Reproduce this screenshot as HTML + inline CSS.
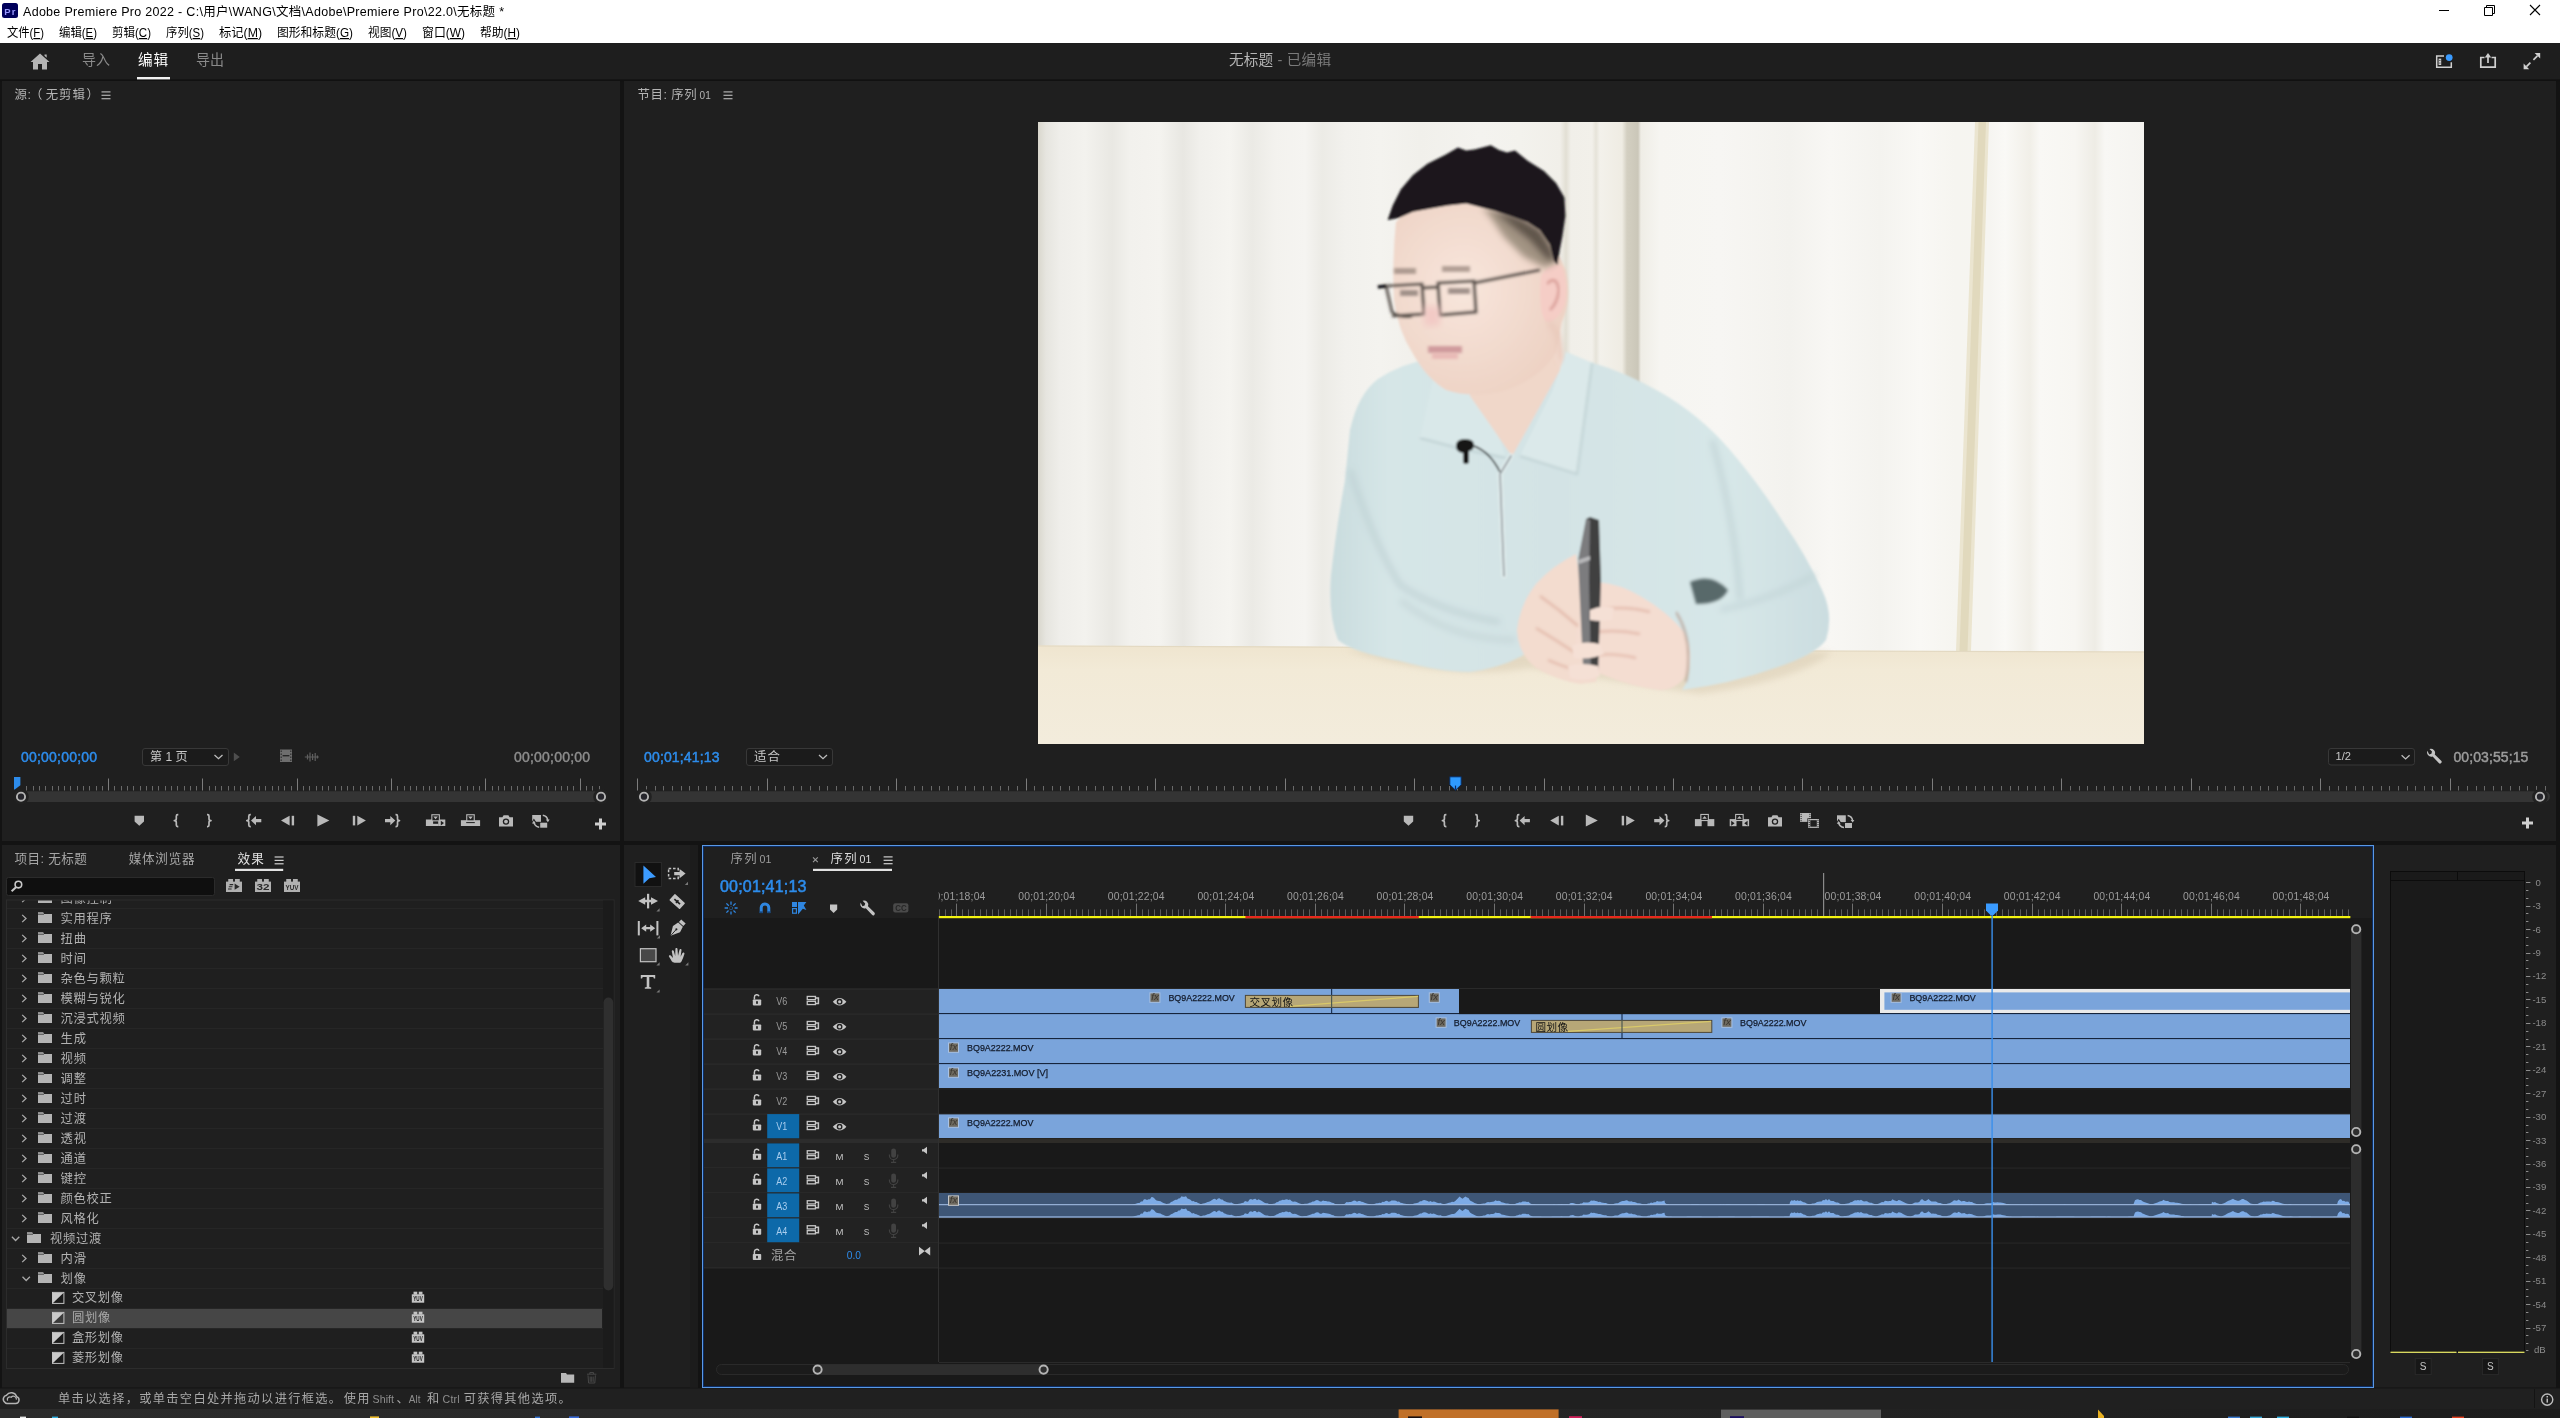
<!DOCTYPE html>
<html lang="zh-CN"><head><meta charset="utf-8"><title>Adobe Premiere Pro 2022</title>
<style>
html,body{margin:0;padding:0;background:#161616;}
body{width:2560px;height:1418px;overflow:hidden;position:relative;}
svg#ui{position:absolute;left:0;top:0;display:block;opacity:.999;font-family:"Liberation Sans","Noto Sans CJK SC",sans-serif;}
svg#ui text{white-space:pre;}
</style></head><body>
<svg id="ui" width="2560" height="1418" viewBox="0 0 2560 1418">
<rect x="0" y="0" width="2560" height="1418" fill="#131313"/>
<g id="top">
<rect x="0" y="0" width="2560" height="43" fill="#ffffff" />
<rect x="2" y="3" width="16" height="15" fill="#00005b" rx="2.5"/>
<text x="4.2" y="14.6" font-size="9.5" fill="#9999ff" textLength="11.3" lengthAdjust="spacing" font-weight="bold" >Pr</text>
<text x="23" y="16" font-size="12.5" fill="#000" textLength="481" lengthAdjust="spacing" >Adobe Premiere Pro 2022 - C:\用户\WANG\文档\Adobe\Premiere Pro\22.0\无标题 *</text>
<line x1="2439" y1="10.5" x2="2449" y2="10.5" stroke="#000" stroke-width="1" />
<path d="M2484.5 7.5h8v8h-8z M2486.5 7.5v-2h8v8h-2" fill="none" stroke="#000" stroke-width="1" />
<path d="M2530 5l10 10M2540 5l-10 10" fill="none" stroke="#000" stroke-width="1.1" />
<text x="7" y="37" font-size="12.3" fill="#000" textLength="37" lengthAdjust="spacingAndGlyphs">文件(<tspan text-decoration="underline">F</tspan>)</text>
<text x="59" y="37" font-size="12.3" fill="#000" textLength="38" lengthAdjust="spacingAndGlyphs">编辑(<tspan text-decoration="underline">E</tspan>)</text>
<text x="112" y="37" font-size="12.3" fill="#000" textLength="39" lengthAdjust="spacingAndGlyphs">剪辑(<tspan text-decoration="underline">C</tspan>)</text>
<text x="166" y="37" font-size="12.3" fill="#000" textLength="38" lengthAdjust="spacingAndGlyphs">序列(<tspan text-decoration="underline">S</tspan>)</text>
<text x="219" y="37" font-size="12.3" fill="#000" textLength="43" lengthAdjust="spacingAndGlyphs">标记(<tspan text-decoration="underline">M</tspan>)</text>
<text x="277" y="37" font-size="12.3" fill="#000" textLength="76" lengthAdjust="spacingAndGlyphs">图形和标题(<tspan text-decoration="underline">G</tspan>)</text>
<text x="368" y="37" font-size="12.3" fill="#000" textLength="39" lengthAdjust="spacingAndGlyphs">视图(<tspan text-decoration="underline">V</tspan>)</text>
<text x="422" y="37" font-size="12.3" fill="#000" textLength="43" lengthAdjust="spacingAndGlyphs">窗口(<tspan text-decoration="underline">W</tspan>)</text>
<text x="480" y="37" font-size="12.3" fill="#000" textLength="40" lengthAdjust="spacingAndGlyphs">帮助(<tspan text-decoration="underline">H</tspan>)</text>
<rect x="0" y="43" width="2560" height="37" fill="#1e1e1e" />
<rect x="0" y="79.4" width="2560" height="1.8" fill="#111111" />
<path d="M40 53.5 L30.5 62 L33 62 L33 69.5 L38 69.5 L38 64 L42 64 L42 69.5 L47 69.5 L47 62 L49.5 62 Z M44.5 54.5h2.2v3.2l-2.2-2z" fill="#b4b4b4" />
<text x="82" y="65.2" font-size="14.6" fill="#8a8a8a" textLength="28" lengthAdjust="spacingAndGlyphs" >导入</text>
<text x="138" y="65.2" font-size="14.6" fill="#ffffff" textLength="30" lengthAdjust="spacing" >编辑</text>
<text x="196" y="65.2" font-size="14.6" fill="#8a8a8a" textLength="28" lengthAdjust="spacingAndGlyphs" >导出</text>
<rect x="137" y="77" width="33" height="2.4" fill="#f2f2f2" />
<text x="1229" y="65.4" font-size="14.6" fill="#b6b6b6" textLength="102" lengthAdjust="spacing">无标题<tspan fill="#7a7a7a"> - 已编辑</tspan></text>
<path d="M2444 56h-7.3v11.3h14.6v-5" fill="none" stroke="#d0d0d0" stroke-width="1.5" />
<rect x="2438.6" y="58.6" width="2.6" height="6.4" fill="#d0d0d0" />
<rect x="2439.4" y="60" width="1" height="0.9" fill="#1d1d1d" />
<rect x="2439.4" y="62.6" width="1" height="0.9" fill="#1d1d1d" />
<circle cx="2449.2" cy="57.6" r="3.4" fill="#3a9bff" />
<path d="M2484.5 57.5h-3.7v9.6h14.4v-9.6h-3.7" fill="none" stroke="#d0d0d0" stroke-width="1.7" />
<path d="M2488 63v-7" fill="none" stroke="#d0d0d0" stroke-width="1.7" />
<path d="M2484.8 57.4l3.2-4.4l3.2 4.4z" fill="#d0d0d0" />
<path d="M2533.4 59.8l4-4" fill="none" stroke="#d0d0d0" stroke-width="1.7" />
<path d="M2534.6 53h5.6v5.6z" fill="#d0d0d0" />
<path d="M2530.4 62.6l-4 4" fill="none" stroke="#d0d0d0" stroke-width="1.7" />
<path d="M2529.2 69.2h-5.6v-5.6z" fill="#d0d0d0" />
</g>
<g id="source">
<rect x="2" y="81" width="618" height="760" fill="#1f1f1f" />
<text x="14.4" y="98.8" font-size="12.4" fill="#b4b4b4" textLength="16.6" lengthAdjust="spacing" >源:</text>
<text x="30" y="98.6" font-size="12.4" fill="#b4b4b4" >（</text>
<text x="45.8" y="98.8" font-size="12.4" fill="#b4b4b4" textLength="39" lengthAdjust="spacing" >无剪辑</text>
<text x="86.4" y="98.6" font-size="12.4" fill="#b4b4b4" >）</text>
<rect x="101.5" y="91.3" width="9" height="1.2" fill="#b0b0b0" /><rect x="101.5" y="94.7" width="9" height="1.2" fill="#b0b0b0" /><rect x="101.5" y="98.1" width="9" height="1.2" fill="#b0b0b0" />
<text x="21" y="762" font-size="14" fill="#2d8ceb" textLength="76" lengthAdjust="spacing" stroke="#2d8ceb" stroke-width="0.5">00;00;00;00</text>
<text x="514" y="762" font-size="14" fill="#8c8c8c" textLength="76" lengthAdjust="spacing" stroke="#8c8c8c" stroke-width="0.45">00;00;00;00</text>
<rect x="142.5" y="748.5" width="86" height="17" fill="#1b1b1b" rx="2.5" stroke="#383838" stroke-width="1"/>
<text x="150" y="761.2" font-size="12.4" fill="#c8c8c8" textLength="37.5" lengthAdjust="spacingAndGlyphs" >第 1 页</text>
<path d="M214.5 755.1l4 3.6l4 -3.6" fill="none" stroke="#bdbdbd" stroke-width="1.3" />
<path d="M233.8 752.6l6 4.3l-6 4.3z" fill="#4e4e4e" />
<rect x="280" y="749.5" width="12" height="12.5" fill="#6e6e6e" />
<rect x="282.6" y="755" width="6.8" height="1.4" fill="#262626" />
<rect x="280.6" y="750.5" width="1.2" height="1.4" fill="#2a2a2a" /><rect x="290.2" y="750.5" width="1.2" height="1.4" fill="#2a2a2a" />
<rect x="280.6" y="753.5" width="1.2" height="1.4" fill="#2a2a2a" /><rect x="290.2" y="753.5" width="1.2" height="1.4" fill="#2a2a2a" />
<rect x="280.6" y="756.5" width="1.2" height="1.4" fill="#2a2a2a" /><rect x="290.2" y="756.5" width="1.2" height="1.4" fill="#2a2a2a" />
<rect x="280.6" y="759.5" width="1.2" height="1.4" fill="#2a2a2a" /><rect x="290.2" y="759.5" width="1.2" height="1.4" fill="#2a2a2a" />
<path d="M304.8 757h14 M307.5 754.5v5 M310 752.6v8.8 M312.6 754v6 M315.2 753v8 M317.4 755.4v3.2" fill="none" stroke="#5f5f5f" stroke-width="1.2" />
<path d="M26.5 786V790.5M33.5 786V790.5M39.5 786V790.5M45.5 786V790.5M52.5 786V790.5M58.5 786V790.5M64.5 786V790.5M70.5 786V790.5M77.5 786V790.5M83.5 786V790.5M89.5 786V790.5M96.5 786V790.5M102.5 786V790.5M114.5 786V790.5M121.5 786V790.5M127.5 786V790.5M133.5 786V790.5M140.5 786V790.5M146.5 786V790.5M152.5 786V790.5M158.5 786V790.5M165.5 786V790.5M171.5 786V790.5M177.5 786V790.5M184.5 786V790.5M190.5 786V790.5M196.5 786V790.5M209.5 786V790.5M215.5 786V790.5M221.5 786V790.5M228.5 786V790.5M234.5 786V790.5M240.5 786V790.5M247.5 786V790.5M253.5 786V790.5M259.5 786V790.5M265.5 786V790.5M272.5 786V790.5M278.5 786V790.5M284.5 786V790.5M291.5 786V790.5M303.5 786V790.5M309.5 786V790.5M316.5 786V790.5M322.5 786V790.5M328.5 786V790.5M335.5 786V790.5M341.5 786V790.5M347.5 786V790.5M353.5 786V790.5M360.5 786V790.5M366.5 786V790.5M372.5 786V790.5M379.5 786V790.5M385.5 786V790.5M397.5 786V790.5M404.5 786V790.5M410.5 786V790.5M416.5 786V790.5M423.5 786V790.5M429.5 786V790.5M435.5 786V790.5M441.5 786V790.5M448.5 786V790.5M454.5 786V790.5M460.5 786V790.5M467.5 786V790.5M473.5 786V790.5M479.5 786V790.5M492.5 786V790.5M498.5 786V790.5M504.5 786V790.5M511.5 786V790.5M517.5 786V790.5M523.5 786V790.5M529.5 786V790.5M536.5 786V790.5M542.5 786V790.5M548.5 786V790.5M555.5 786V790.5M561.5 786V790.5M567.5 786V790.5M573.5 786V790.5M586.5 786V790.5M592.5 786V790.5M599.5 786V790.5" fill="none" stroke="#6a6a6a" stroke-width="1" /><path d="M108.5 778.5V790.5M202.5 778.5V790.5M297.5 778.5V790.5M391.5 778.5V790.5M485.5 778.5V790.5M580.5 778.5V790.5" fill="none" stroke="#7c7c7c" stroke-width="1" />
<rect x="17" y="791.3" width="590" height="10.6" fill="#343434" rx="5.3"/>
<circle cx="21" cy="796.7" r="7.8" fill="#212121" /><circle cx="601" cy="796.7" r="7.8" fill="#212121" /><circle cx="21" cy="796.7" r="4.1" fill="#26262c" stroke="#b4b4b4" stroke-width="1.9" /><circle cx="601" cy="796.7" r="4.1" fill="#26262c" stroke="#b4b4b4" stroke-width="1.9" />
<path d="M14 777h6.4v8.2l-5.6 4.4h-0.8z" fill="#2d8ceb" />
<path d="M134.6 815.8h9.4v5.6l-4.7 4.4l-4.7-4.4z" fill="#b9b9b9" />
<path d="M178.3 814.6h-0.6q-1.4 0-1.4 1.6v2.6q0 1.8-2 1.8q2 0 2 1.8v2.6q0 1.6 1.4 1.6h0.6" fill="none" stroke="#b9b9b9" stroke-width="1.7" stroke-linejoin="round"/><path d="M207 814.6h0.6q1.4 0 1.4 1.6v2.6q0 1.8 2 1.8q-2 0-2 1.8v2.6q0 1.6-1.4 1.6h-0.6" fill="none" stroke="#b9b9b9" stroke-width="1.7" stroke-linejoin="round"/>
<path d="M250.8 814.6h-0.6q-1.4 0-1.4 1.6v2.6q0 1.8-2 1.8q2 0 2 1.8v2.6q0 1.6 1.4 1.6h0.6" fill="none" stroke="#b9b9b9" stroke-width="1.7" stroke-linejoin="round"/><path d="M251 820.6l5-4.6v3h5.3v3.2h-5.3v3z" fill="#b9b9b9" /><path d="M281 820.6l8.6-4.8v9.6z" fill="#b9b9b9" /><rect x="291.7" y="815.8" width="2.4" height="9.6" fill="#b9b9b9" /><path d="M317.4 814.6l12 6l-12 6z" fill="#b9b9b9" /><path d="M365.9 820.6l-8.6-4.8v9.6z" fill="#b9b9b9" /><rect x="352.8" y="815.8" width="2.4" height="9.6" fill="#b9b9b9" /><path d="M395.5 814.6h0.6q1.4 0 1.4 1.6v2.6q0 1.8 2 1.8q-2 0-2 1.8v2.6q0 1.6-1.4 1.6h-0.6" fill="none" stroke="#b9b9b9" stroke-width="1.7" stroke-linejoin="round"/><path d="M395.3 820.6l-5-4.6v3h-5.3v3.2h5.3v3z" fill="#b9b9b9" />
<rect x="425.9" y="819.5" width="7.2" height="6.5" fill="#b9b9b9" /><rect x="438.2" y="819.5" width="7.1" height="6.5" fill="#b9b9b9" /><rect x="433" y="823.8" width="5.4" height="2.2" fill="#b9b9b9" /><rect x="431.3" y="814.2" width="8.6" height="7.2" fill="#b9b9b9" /><rect x="432.4" y="815.3" width="6.4" height="5" fill="#1f1f1f" /><path d="M433.3 816.4h4.6l-2.3 2.9z" fill="#b9b9b9" /><path d="M440.8 820.8l3.2 2.3l-3.2 2.3z" fill="#1f1f1f" /><rect x="460.9" y="820.2" width="19.2" height="5.8" fill="#b9b9b9" /><rect x="466.2" y="814.2" width="8.6" height="7.2" fill="#b9b9b9" /><rect x="467.3" y="815.3" width="6.4" height="5" fill="#1f1f1f" /><path d="M468.2 816.4h4.6l-2.3 2.9z" fill="#b9b9b9" /><rect x="466.2" y="822.1" width="8.6" height="1" fill="#1f1f1f" /><path d="M499 817.2h3.4l1.2-2h4.8l1.2 2h3.4v9.2h-14z" fill="#b9b9b9" /><circle cx="506" cy="821.6" r="3.2" fill="#1f1f1f" /><circle cx="506" cy="821.6" r="1.9" fill="#b9b9b9" /><rect x="532.2" y="815" width="8.8" height="6.8" fill="#b9b9b9" /><rect x="540.2" y="822.7" width="7" height="5" fill="#b9b9b9" /><path d="M542.8 815.3q4.4 0.8 5 5" fill="none" stroke="#b9b9b9" stroke-width="1.5" /><path d="M545.8 819.6h3.8l-1.7 2.6z" fill="#b9b9b9" /><path d="M539.2 827.2q-4.6-0.6-5.4-5" fill="none" stroke="#1f1f1f" stroke-width="3.4" /><path d="M531.8 823.6h4.4l-2.3-3.6z" fill="#1f1f1f" stroke="#1f1f1f" stroke-width="1.6" /><path d="M539.2 827.2q-4.6-0.6-5.4-5" fill="none" stroke="#b9b9b9" stroke-width="1.5" /><path d="M532 823.4h3.8l-2-2.8z" fill="#b9b9b9" />
<rect x="595" y="822.5" width="11" height="3" fill="#cfcfcf" /><rect x="599" y="818.5" width="3" height="11" fill="#cfcfcf" />
</g>
<g id="program">
<rect x="624" y="81" width="1932" height="760" fill="#1f1f1f" />
<text x="637.6" y="98.8" font-size="12.4" fill="#b4b4b4" textLength="59" lengthAdjust="spacing" >节目: 序列</text>
<text x="699.6" y="98.8" font-size="10.8" fill="#b4b4b4" textLength="11.2" lengthAdjust="spacingAndGlyphs" >01</text>
<rect x="723.5" y="91.3" width="9" height="1.2" fill="#b0b0b0" /><rect x="723.5" y="94.7" width="9" height="1.2" fill="#b0b0b0" /><rect x="723.5" y="98.1" width="9" height="1.2" fill="#b0b0b0" />
<defs><clipPath id="vclip"><rect x="1038" y="122" width="1106" height="622"/></clipPath>
<linearGradient id="curt" gradientUnits="userSpaceOnUse" x1="1038" y1="0" x2="2144" y2="0"><stop offset="0.0000" stop-color="#d9d7cd"/><stop offset="0.0072" stop-color="#e6e5df"/><stop offset="0.0199" stop-color="#efeeea"/><stop offset="0.0425" stop-color="#f3f2ee"/><stop offset="0.0669" stop-color="#e9e8e3"/><stop offset="0.0832" stop-color="#f2f1ed"/><stop offset="0.1103" stop-color="#f4f3ef"/><stop offset="0.1311" stop-color="#e8e7e2"/><stop offset="0.1465" stop-color="#f1f0ec"/><stop offset="0.1736" stop-color="#f5f4f0"/><stop offset="0.1935" stop-color="#ebeae5"/><stop offset="0.2143" stop-color="#f3f2ee"/><stop offset="0.2414" stop-color="#f5f4f1"/><stop offset="0.2568" stop-color="#ecebe6"/><stop offset="0.2776" stop-color="#f2f1ed"/><stop offset="0.3092" stop-color="#f4f3ef"/><stop offset="0.3454" stop-color="#f1f0eb"/><stop offset="0.3996" stop-color="#f4f3ef"/><stop offset="0.4358" stop-color="#f3f2ed"/><stop offset="0.4720" stop-color="#f1efe9"/><stop offset="0.4774" stop-color="#e2dfd4"/><stop offset="0.4819" stop-color="#f1efe9"/><stop offset="0.5009" stop-color="#f2f0ea"/><stop offset="0.5045" stop-color="#e6e3d9"/><stop offset="0.5081" stop-color="#f3f1eb"/><stop offset="0.5280" stop-color="#efece3"/><stop offset="0.5325" stop-color="#d3cfc1"/><stop offset="0.5425" stop-color="#cbc7b9"/><stop offset="0.5452" stop-color="#efede6"/><stop offset="0.5624" stop-color="#f6f5f1"/><stop offset="0.6166" stop-color="#f7f6f3"/><stop offset="0.6799" stop-color="#f3f2ee"/><stop offset="0.7161" stop-color="#f8f7f4"/><stop offset="0.7613" stop-color="#f4f3ef"/><stop offset="0.7975" stop-color="#f9f8f5"/><stop offset="0.8291" stop-color="#f6f5f0"/><stop offset="0.8608" stop-color="#f6f5f1"/><stop offset="0.8743" stop-color="#faf9f6"/><stop offset="0.8969" stop-color="#f1efe8"/><stop offset="0.9060" stop-color="#f9f8f5"/><stop offset="0.9376" stop-color="#f7f6f2"/><stop offset="0.9557" stop-color="#eeece5"/><stop offset="0.9647" stop-color="#f8f7f4"/><stop offset="1.0000" stop-color="#f5f4f0"/></linearGradient>
<linearGradient id="tbl" x1="0" y1="0" x2="0" y2="1"><stop offset="0" stop-color="#efe5cf"/><stop offset="0.25" stop-color="#f2ead7"/><stop offset="1" stop-color="#f3ecdc"/></linearGradient>
<linearGradient id="swt" gradientUnits="userSpaceOnUse" x1="1330" y1="0" x2="1830" y2="0"><stop offset="0" stop-color="#c9dcde"/><stop offset="0.12" stop-color="#d6e6e7"/><stop offset="0.45" stop-color="#d3e3e5"/><stop offset="0.8" stop-color="#d7e7e8"/><stop offset="1" stop-color="#cbdde0"/></linearGradient>
<radialGradient id="skin" cx="0.4" cy="0.45" r="0.7"><stop offset="0" stop-color="#f8e6dc"/><stop offset="1" stop-color="#eccfc0"/></radialGradient>
<filter id="b1" x="-5%" y="-5%" width="110%" height="110%"><feGaussianBlur stdDeviation="1.1"/></filter>
<filter id="b3" x="-20%" y="-20%" width="140%" height="140%"><feGaussianBlur stdDeviation="3.2"/></filter>
<filter id="b6" x="-30%" y="-30%" width="160%" height="160%"><feGaussianBlur stdDeviation="6"/></filter>
</defs>
<g clip-path="url(#vclip)"><rect x="1038" y="122" width="1106" height="622" fill="url(#curt)" />
<path d="M1975 122L1989 122L1971 651L1956 651Z" fill="#ebe5d0" />
<path d="M1978.5 122L1986 122L1967.5 651L1959.5 651Z" fill="#e1d9bd" />
<path d="M1038 645.5L1400 647L1800 650.5L2144 651.5V744H1038Z" fill="url(#tbl)" />
<path d="M1038 646L1400 647.5L1800 651L2144 652" fill="none" stroke="#e3d9c2" stroke-width="1.2" />
<path d="M1345 650Q1450 682 1530 668L1700 694Q1800 680 1832 652Z" fill="#d9ccb4" filter="url(#b3)" opacity="0.55"/>
<g filter="url(#b1)"><path d="M1462 360L1560 330L1566 400L1520 470L1480 420Z" fill="#f1d9cc" />
<path d="M1434 358 Q1402 363 1378 379 Q1358 394 1350 430 L1345 480 Q1336 530 1331 575 Q1328 615 1338 640 Q1352 652 1400 661 Q1440 672 1470 672 Q1500 668 1522 656L1540 640 L1600 620 L1680 640 L1690 660 Q1690 680 1682 690 Q1730 684 1775 668 Q1815 655 1826 640 Q1834 615 1822 590 Q1806 555 1785 525 Q1760 485 1730 450 Q1700 415 1660 392 Q1625 372 1590 362L1566 352 L1560 370 L1512 456 L1470 396 L1452 372 Z" fill="url(#swt)" />
<path d="M1690 582Q1712 572 1728 590Q1722 604 1696 604Z" fill="#58696a" filter="url(#b1)"/>
<path d="M1350 470Q1372 540 1400 585Q1440 612 1500 622" fill="none" stroke="#bccfd2" stroke-width="5" filter="url(#b3)" opacity="0.8"/>
<path d="M1712 440Q1735 520 1740 600" fill="none" stroke="#bed1d4" stroke-width="5" filter="url(#b3)" opacity="0.8"/>
<path d="M1400 600Q1450 640 1515 640" fill="none" stroke="#c3d5d7" stroke-width="6" filter="url(#b3)" opacity="0.7"/>
<path d="M1720 610Q1770 600 1815 575" fill="none" stroke="#bfd2d5" stroke-width="5" filter="url(#b3)" opacity="0.7"/>
<path d="M1436 366L1468 392L1486 410L1500 440L1506 458L1458 448L1420 438Z" fill="#d9e8e9" />
<path d="M1566 352L1592 363L1577 474L1520 456L1552 392Z" fill="#dbe9ea" />
<path d="M1420 438L1458 448L1506 458" fill="none" stroke="#b6c9cc" stroke-width="1.6" filter="url(#b1)"/>
<path d="M1520 456L1577 474L1592 363" fill="none" stroke="#b9ccce" stroke-width="1.6" filter="url(#b1)"/>
<path d="M1470 396L1512 456L1560 370L1552 352L1470 386Z" fill="#f0d7c9" />
<path d="M1511 456L1500 474L1504 576" fill="none" stroke="#e3eeee" stroke-width="5" stroke-linecap="round"/>
<path d="M1511 456L1500 474L1504 576" fill="none" stroke="#8f979c" stroke-width="1.6" stroke-linecap="round"/>
<path d="M1456 446q0-7 9-7q9 0 9 6q0 5-5 6v10q0 3-3 3q-3 0-3-3v-8q-7-1-7-7z" fill="#121212" />
<path d="M1474 446Q1490 452 1500 472" fill="none" stroke="#1a1a1a" stroke-width="1.4" />
<path d="M1396 222Q1392 262 1394 300Q1398 330 1412 352Q1426 378 1446 390Q1470 398 1500 392Q1540 380 1556 352L1562 322Q1572 300 1566 270L1556 250L1540 215L1470 200L1410 208Z" fill="url(#skin)" />
<path d="M1541 276Q1550 262 1562 266Q1569 284 1565 304Q1558 322 1546 322Q1538 312 1541 276Z" fill="#f5cdc6" />
<path d="M1547 284Q1556 274 1559 290Q1557 304 1550 310" fill="none" stroke="#d99e98" stroke-width="2.6" filter="url(#b1)"/>
<path d="M1548 322Q1560 330 1562 360" fill="none" stroke="#e3bfb2" stroke-width="3" filter="url(#b3)"/>
<path d="M1482 207L1511 215L1528 222L1541 230L1551 244L1556 262L1545 268L1524 257L1504 237L1491 218Z" fill="#9a8c7c" filter="url(#b3)" opacity="0.9"/>
<path d="M1492 209L1520 218L1540 230L1552 250L1556 262L1546 258L1530 240L1510 224Z" fill="#4a4038" filter="url(#b3)" opacity="0.75"/>
<path d="M1387.6 220L1392.7 205.6L1400.9 189.3L1413 175L1427.5 163.7L1445.9 154.5L1458 147.4L1466 150.6L1474.5 149.4L1490.8 145.3L1499 150L1507 152.5L1515 150.4L1527.6 160.7L1544 170.9L1556 183L1564.4 197.5L1565.4 215.9L1562.4 236.3L1559.3 252.6L1557.3 265L1554 260.8L1550 244.5L1540 230L1527.6 222L1511 215.9L1495 210.7L1482.6 207.7L1466.3 203.6L1448 205.6L1429.5 208.7L1413 211.8L1398.8 217.9Z" fill="#1a191c" />
<path d="M1378 287L1386 286L1392 312Q1400 318 1412 316M1386 286L1422 284L1424 314L1392 316M1438 283L1474 281L1476 312L1440 315ZM1422 288L1438 287M1474 283L1540 270" fill="none" stroke="#4a423d" stroke-width="2.6" filter="url(#b1)"/>
<path d="M1378 287L1386 286" fill="none" stroke="#15151a" stroke-width="3" />
<rect x="1394" y="268" width="22" height="6" fill="#9b8a80" filter="url(#b1)" opacity="0.8"/>
<rect x="1442" y="266" width="28" height="6" fill="#a08e84" filter="url(#b1)" opacity="0.8"/>
<rect x="1400" y="290" width="18" height="6" fill="#8a7c76" filter="url(#b1)" opacity="0.8"/>
<rect x="1448" y="288" width="22" height="6" fill="#8a7c76" filter="url(#b1)" opacity="0.8"/>
<rect x="1424" y="306" width="16" height="20" fill="#f2c8c4" filter="url(#b3)" opacity="0.9"/>
<rect x="1428" y="346" width="34" height="7" fill="#cf9a9c" filter="url(#b1)"/>
<rect x="1432" y="353" width="26" height="6" fill="#e8b9b6" filter="url(#b1)"/>
<path d="M1576 554Q1552 566 1536 584Q1520 604 1517 630Q1518 654 1536 668Q1556 680 1580 684L1596 682L1600 660L1590 620L1580 580Z" fill="#f3dccf" />
<path d="M1598 582Q1620 584 1640 596Q1668 612 1684 632Q1694 652 1688 672Q1678 690 1660 690Q1630 686 1606 676Q1584 668 1576 652Q1574 630 1584 610Z" fill="#f4ddd1" />
<path d="M1540 596Q1560 610 1578 626M1536 628Q1556 640 1574 652M1548 660Q1566 668 1584 672" fill="none" stroke="#e2b9aa" stroke-width="2.4" filter="url(#b1)"/>
<path d="M1590 612Q1620 604 1650 612M1584 634Q1612 628 1640 634M1590 656Q1612 652 1636 658" fill="none" stroke="#e4bcae" stroke-width="2.4" filter="url(#b1)"/>
<path d="M1676 612Q1694 640 1686 682" fill="none" stroke="#b9a59a" stroke-width="2" filter="url(#b1)"/>
<path d="M1586 519L1590 517L1599 520L1601 580L1598 676L1590 674L1588 600Z" fill="#3f3f41" />
<path d="M1586 519L1590 520L1589 580L1591 672L1583 666L1578 560Z" fill="#7c7c7e" />
<path d="M1578 560L1590 556L1590 560L1579 564Z" fill="#b8b8ba" />
<path d="M1572 646Q1584 640 1600 644L1604 654Q1590 660 1574 658Z" fill="#f5e0d5" />
<path d="M1568 666Q1582 662 1598 666L1600 676Q1586 682 1570 678Z" fill="#f5e0d5" />
<path d="M1590 610Q1602 604 1614 608L1612 620Q1600 622 1590 620Z" fill="#f5e0d5" /></g></g>
<text x="644" y="762" font-size="14" fill="#2d8ceb" textLength="75.5" lengthAdjust="spacing" stroke="#2d8ceb" stroke-width="0.5">00;01;41;13</text>
<rect x="746.5" y="748.5" width="86" height="17" fill="#1b1b1b" rx="2.5" stroke="#383838" stroke-width="1"/>
<text x="754" y="761.2" font-size="12.4" fill="#c8c8c8" textLength="26" lengthAdjust="spacing" >适合</text>
<path d="M819 755.1l4 3.6l4 -3.6" fill="none" stroke="#bdbdbd" stroke-width="1.3" />
<rect x="2328.5" y="748.5" width="86" height="16.5" fill="#1b1b1b" rx="2.5" stroke="#383838" stroke-width="1"/>
<text x="2335.5" y="760" font-size="11.6" fill="#c8c8c8" textLength="15.5" lengthAdjust="spacingAndGlyphs" >1/2</text>
<path d="M2401.6 755.3l4 3.6l4 -3.6" fill="none" stroke="#bdbdbd" stroke-width="1.3" />
<path d="M-6.6 -5.6 a4.2 4.2 0 0 0 5.2 5.6 l6.2 6.6 a1.5 1.5 0 0 0 2.4 -2.2 l-6.4 -6.4 a4.2 4.2 0 0 0 -5.4 -5.4 l2.6 2.6 l-0.6 2.2 l-2.2 0.6 z" fill="#c4c4c4" transform="translate(2434 756.4) scale(1.0)"/>
<text x="2453.4" y="762" font-size="14" fill="#9c9c9c" textLength="75" lengthAdjust="spacing" stroke="#9c9c9c" stroke-width="0.45">00;03;55;15</text>
<path d="M646.5 786V790.5M655.5 786V790.5M663.5 786V790.5M672.5 786V790.5M681.5 786V790.5M689.5 786V790.5M698.5 786V790.5M706.5 786V790.5M715.5 786V790.5M724.5 786V790.5M732.5 786V790.5M741.5 786V790.5M750.5 786V790.5M758.5 786V790.5M775.5 786V790.5M784.5 786V790.5M793.5 786V790.5M801.5 786V790.5M810.5 786V790.5M819.5 786V790.5M827.5 786V790.5M836.5 786V790.5M845.5 786V790.5M853.5 786V790.5M862.5 786V790.5M870.5 786V790.5M879.5 786V790.5M888.5 786V790.5M905.5 786V790.5M914.5 786V790.5M922.5 786V790.5M931.5 786V790.5M939.5 786V790.5M948.5 786V790.5M957.5 786V790.5M965.5 786V790.5M974.5 786V790.5M983.5 786V790.5M991.5 786V790.5M1000.5 786V790.5M1008.5 786V790.5M1017.5 786V790.5M1034.5 786V790.5M1043.5 786V790.5M1052.5 786V790.5M1060.5 786V790.5M1069.5 786V790.5M1078.5 786V790.5M1086.5 786V790.5M1095.5 786V790.5M1103.5 786V790.5M1112.5 786V790.5M1121.5 786V790.5M1129.5 786V790.5M1138.5 786V790.5M1147.5 786V790.5M1164.5 786V790.5M1172.5 786V790.5M1181.5 786V790.5M1190.5 786V790.5M1198.5 786V790.5M1207.5 786V790.5M1216.5 786V790.5M1224.5 786V790.5M1233.5 786V790.5M1242.5 786V790.5M1250.5 786V790.5M1259.5 786V790.5M1267.5 786V790.5M1276.5 786V790.5M1293.5 786V790.5M1302.5 786V790.5M1311.5 786V790.5M1319.5 786V790.5M1328.5 786V790.5M1336.5 786V790.5M1345.5 786V790.5M1354.5 786V790.5M1362.5 786V790.5M1371.5 786V790.5M1380.5 786V790.5M1388.5 786V790.5M1397.5 786V790.5M1405.5 786V790.5M1423.5 786V790.5M1431.5 786V790.5M1440.5 786V790.5M1449.5 786V790.5M1457.5 786V790.5M1466.5 786V790.5M1475.5 786V790.5M1483.5 786V790.5M1492.5 786V790.5M1500.5 786V790.5M1509.5 786V790.5M1518.5 786V790.5M1526.5 786V790.5M1535.5 786V790.5M1552.5 786V790.5M1561.5 786V790.5M1569.5 786V790.5M1578.5 786V790.5M1587.5 786V790.5M1595.5 786V790.5M1604.5 786V790.5M1613.5 786V790.5M1621.5 786V790.5M1630.5 786V790.5M1638.5 786V790.5M1647.5 786V790.5M1656.5 786V790.5M1664.5 786V790.5M1682.5 786V790.5M1690.5 786V790.5M1699.5 786V790.5M1708.5 786V790.5M1716.5 786V790.5M1725.5 786V790.5M1733.5 786V790.5M1742.5 786V790.5M1751.5 786V790.5M1759.5 786V790.5M1768.5 786V790.5M1777.5 786V790.5M1785.5 786V790.5M1794.5 786V790.5M1811.5 786V790.5M1820.5 786V790.5M1828.5 786V790.5M1837.5 786V790.5M1846.5 786V790.5M1854.5 786V790.5M1863.5 786V790.5M1871.5 786V790.5M1880.5 786V790.5M1889.5 786V790.5M1897.5 786V790.5M1906.5 786V790.5M1915.5 786V790.5M1923.5 786V790.5M1941.5 786V790.5M1949.5 786V790.5M1958.5 786V790.5M1966.5 786V790.5M1975.5 786V790.5M1984.5 786V790.5M1992.5 786V790.5M2001.5 786V790.5M2010.5 786V790.5M2018.5 786V790.5M2027.5 786V790.5M2035.5 786V790.5M2044.5 786V790.5M2053.5 786V790.5M2070.5 786V790.5M2079.5 786V790.5M2087.5 786V790.5M2096.5 786V790.5M2104.5 786V790.5M2113.5 786V790.5M2122.5 786V790.5M2130.5 786V790.5M2139.5 786V790.5M2148.5 786V790.5M2156.5 786V790.5M2165.5 786V790.5M2174.5 786V790.5M2182.5 786V790.5M2199.5 786V790.5M2208.5 786V790.5M2217.5 786V790.5M2225.5 786V790.5M2234.5 786V790.5M2243.5 786V790.5M2251.5 786V790.5M2260.5 786V790.5M2268.5 786V790.5M2277.5 786V790.5M2286.5 786V790.5M2294.5 786V790.5M2303.5 786V790.5M2312.5 786V790.5M2329.5 786V790.5M2338.5 786V790.5M2346.5 786V790.5M2355.5 786V790.5M2363.5 786V790.5M2372.5 786V790.5M2381.5 786V790.5M2389.5 786V790.5M2398.5 786V790.5M2407.5 786V790.5M2415.5 786V790.5M2424.5 786V790.5M2432.5 786V790.5M2441.5 786V790.5M2458.5 786V790.5M2467.5 786V790.5M2476.5 786V790.5M2484.5 786V790.5M2493.5 786V790.5M2501.5 786V790.5M2510.5 786V790.5M2519.5 786V790.5M2527.5 786V790.5M2536.5 786V790.5M2545.5 786V790.5" fill="none" stroke="#6a6a6a" stroke-width="1" /><path d="M637.5 778.5V790.5M767.5 778.5V790.5M896.5 778.5V790.5M1026.5 778.5V790.5M1155.5 778.5V790.5M1285.5 778.5V790.5M1414.5 778.5V790.5M1544.5 778.5V790.5M1673.5 778.5V790.5M1802.5 778.5V790.5M1932.5 778.5V790.5M2061.5 778.5V790.5M2191.5 778.5V790.5M2320.5 778.5V790.5M2450.5 778.5V790.5" fill="none" stroke="#7c7c7c" stroke-width="1" />
<rect x="637" y="791.3" width="1913" height="10.6" fill="#343434" rx="5.3"/>
<circle cx="644" cy="796.7" r="7.8" fill="#212121" /><circle cx="2540" cy="796.7" r="7.8" fill="#212121" /><circle cx="644" cy="796.7" r="4.1" fill="#26262c" stroke="#b4b4b4" stroke-width="1.9" /><circle cx="2540" cy="796.7" r="4.1" fill="#26262c" stroke="#b4b4b4" stroke-width="1.9" />
<path d="M1449.8 776.8h11.4v8l-5.7 5.4l-5.7-5.4z" fill="#2e9aff" stroke="#0b2c5e" stroke-width="1" />
<rect x="1454.9" y="785.6" width="1.2" height="4.2" fill="#0a2a66" />
<path d="M1403.8 815.8h9.4v5.6l-4.7 4.4l-4.7-4.4z" fill="#b9b9b9" />
<path d="M1446.4 814.6h-0.6q-1.4 0-1.4 1.6v2.6q0 1.8-2 1.8q2 0 2 1.8v2.6q0 1.6 1.4 1.6h0.6" fill="none" stroke="#b9b9b9" stroke-width="1.7" stroke-linejoin="round"/><path d="M1475.2 814.6h0.6q1.4 0 1.4 1.6v2.6q0 1.8 2 1.8q-2 0-2 1.8v2.6q0 1.6-1.4 1.6h-0.6" fill="none" stroke="#b9b9b9" stroke-width="1.7" stroke-linejoin="round"/>
<path d="M1519.4 814.6h-0.6q-1.4 0-1.4 1.6v2.6q0 1.8-2 1.8q2 0 2 1.8v2.6q0 1.6 1.4 1.6h0.6" fill="none" stroke="#b9b9b9" stroke-width="1.7" stroke-linejoin="round"/><path d="M1519.6 820.6l5-4.6v3h5.3v3.2h-5.3v3z" fill="#b9b9b9" /><path d="M1550.2 820.6l8.6-4.8v9.6z" fill="#b9b9b9" /><rect x="1560.9" y="815.8" width="2.4" height="9.6" fill="#b9b9b9" /><path d="M1585.8 814.6l12 6l-12 6z" fill="#b9b9b9" /><path d="M1634.8 820.6l-8.6-4.8v9.6z" fill="#b9b9b9" /><rect x="1621.7" y="815.8" width="2.4" height="9.6" fill="#b9b9b9" /><path d="M1664.7 814.6h0.6q1.4 0 1.4 1.6v2.6q0 1.8 2 1.8q-2 0-2 1.8v2.6q0 1.6-1.4 1.6h-0.6" fill="none" stroke="#b9b9b9" stroke-width="1.7" stroke-linejoin="round"/><path d="M1664.5 820.6l-5-4.6v3h-5.3v3.2h5.3v3z" fill="#b9b9b9" />
<rect x="1694.9" y="819.1" width="6.8" height="7.1" fill="#b9b9b9" /><rect x="1707.5" y="819.1" width="6.8" height="7.1" fill="#b9b9b9" /><rect x="1700.3" y="813.9" width="8.6" height="7.2" fill="#b9b9b9" /><rect x="1701.4" y="815" width="6.4" height="5" fill="#1f1f1f" /><path d="M1702.3 818.8h4.6l-2.3-2.9z" fill="#b9b9b9" /><rect x="1729.7" y="819.1" width="6.8" height="7.1" fill="#b9b9b9" /><rect x="1742.3" y="819.1" width="6.8" height="7.1" fill="#b9b9b9" /><rect x="1735.1" y="813.9" width="8.6" height="7.2" fill="#b9b9b9" /><rect x="1736.2" y="815" width="6.4" height="5" fill="#1f1f1f" /><path d="M1737.1 818.8h4.6l-2.3-2.9z" fill="#b9b9b9" /><path d="M1731.2 820.7l3.4 2.5l-3.4 2.5z M1747.6 820.7l-3.4 2.5l3.4 2.5z" fill="#1f1f1f" /><path d="M1768 817.2h3.4l1.2-2h4.8l1.2 2h3.4v9.2h-14z" fill="#b9b9b9" /><circle cx="1775" cy="821.6" r="3.2" fill="#1f1f1f" /><circle cx="1775" cy="821.6" r="1.9" fill="#b9b9b9" /><rect x="1800" y="813" width="11" height="8.9" fill="#b9b9b9" /><rect x="1800.6" y="813.8" width="1" height="1.1" fill="#1f1f1f" /><rect x="1809.4" y="813.8" width="1" height="1.1" fill="#1f1f1f" /><rect x="1800.6" y="815.9" width="1" height="1.1" fill="#1f1f1f" /><rect x="1809.4" y="815.9" width="1" height="1.1" fill="#1f1f1f" /><rect x="1800.6" y="818" width="1" height="1.1" fill="#1f1f1f" /><rect x="1809.4" y="818" width="1" height="1.1" fill="#1f1f1f" /><rect x="1800.6" y="820.1" width="1" height="1.1" fill="#1f1f1f" /><rect x="1809.4" y="820.1" width="1" height="1.1" fill="#1f1f1f" /><rect x="1807.4" y="818.3" width="11.6" height="9.6" fill="#1f1f1f" /><rect x="1808.1" y="819" width="10.9" height="8.9" fill="#b9b9b9" /><rect x="1810.3" y="820.2" width="6.5" height="6.5" fill="#1f1f1f" /><rect x="1808.7" y="819.8" width="1" height="1.1" fill="#1f1f1f" /><rect x="1817.5" y="819.8" width="1" height="1.1" fill="#1f1f1f" /><rect x="1808.7" y="821.9" width="1" height="1.1" fill="#1f1f1f" /><rect x="1817.5" y="821.9" width="1" height="1.1" fill="#1f1f1f" /><rect x="1808.7" y="824" width="1" height="1.1" fill="#1f1f1f" /><rect x="1817.5" y="824" width="1" height="1.1" fill="#1f1f1f" /><rect x="1808.7" y="826.1" width="1" height="1.1" fill="#1f1f1f" /><rect x="1817.5" y="826.1" width="1" height="1.1" fill="#1f1f1f" /><rect x="1837" y="815.3" width="8.8" height="6.8" fill="#b9b9b9" /><rect x="1845" y="823" width="7" height="5" fill="#b9b9b9" /><path d="M1847.6 815.6q4.4 0.8 5 5" fill="none" stroke="#b9b9b9" stroke-width="1.5" /><path d="M1850.6 819.9h3.8l-1.7 2.6z" fill="#b9b9b9" /><path d="M1844 827.5q-4.6-0.6-5.4-5" fill="none" stroke="#1f1f1f" stroke-width="3.4" /><path d="M1836.6 823.9h4.4l-2.3-3.6z" fill="#1f1f1f" stroke="#1f1f1f" stroke-width="1.6" /><path d="M1844 827.5q-4.6-0.6-5.4-5" fill="none" stroke="#b9b9b9" stroke-width="1.5" /><path d="M1836.8 823.7h3.8l-2-2.8z" fill="#b9b9b9" />
<rect x="2522" y="821.5" width="11" height="3" fill="#cfcfcf" /><rect x="2526" y="817.5" width="3" height="11" fill="#cfcfcf" />
</g>
<g id="effects">
<rect x="2" y="845" width="618" height="542.5" fill="#1f1f1f" />
<text x="14.4" y="862.7" font-size="12.6" fill="#a6a6a6" textLength="72.4" lengthAdjust="spacing" >项目: 无标题</text>
<text x="128.7" y="862.7" font-size="12.6" fill="#a6a6a6" textLength="65.9" lengthAdjust="spacing" >媒体浏览器</text>
<text x="237.4" y="862.7" font-size="12.6" fill="#e0e0e0" textLength="26.4" lengthAdjust="spacing" >效果</text>
<rect x="274.6" y="856.4" width="9" height="1.2" fill="#d0d0d0" /><rect x="274.6" y="859.8" width="9" height="1.2" fill="#d0d0d0" /><rect x="274.6" y="863.2" width="9" height="1.2" fill="#d0d0d0" />
<rect x="235" y="868.8" width="48.2" height="2.2" fill="#e2e2e2" />
<rect x="6.5" y="877.5" width="208" height="18" fill="#0f0f0f" rx="2" stroke="#2b2b2b" stroke-width="1"/>
<circle cx="18.4" cy="884.6" r="3.3" fill="none" stroke="#c8c8c8" stroke-width="1.6" /><path d="M16 887.2l-4.4 4" fill="none" stroke="#c8c8c8" stroke-width="2" />
<rect x="226" y="881.6" width="16" height="10.4" fill="#b0b0b0" /><rect x="228.24" y="879" width="4.8" height="3" fill="#b0b0b0" /><rect x="234.96" y="879" width="4.8" height="3" fill="#b0b0b0" /><path d="M234.6 883.6l5 3.1l-5 3.1z" fill="#2a2a2a" /><path d="M229.6 884.6h3.6M228.8 886.8h3.6M228 889h3.6" fill="none" stroke="#2a2a2a" stroke-width="1.1" />
<rect x="255" y="881.6" width="16" height="10.4" fill="#b0b0b0" /><rect x="257.24" y="879" width="4.8" height="3" fill="#b0b0b0" /><rect x="263.96" y="879" width="4.8" height="3" fill="#b0b0b0" /><text x="263" y="890.3" font-size="9" fill="#2a2a2a" text-anchor="middle" font-weight="bold" textLength="13" lengthAdjust="spacingAndGlyphs">32</text>
<rect x="284" y="881.6" width="16" height="10.4" fill="#b0b0b0" /><rect x="286.24" y="879" width="4.8" height="3" fill="#b0b0b0" /><rect x="292.96" y="879" width="4.8" height="3" fill="#b0b0b0" /><text x="292" y="890.3" font-size="8" fill="#2a2a2a" text-anchor="middle" font-weight="bold" textLength="13" lengthAdjust="spacingAndGlyphs">YUV</text>
<rect x="6.5" y="900" width="607.5" height="468.5" fill="none" stroke="#2c2c2c" stroke-width="1"/>
<rect x="603" y="900.5" width="10.6" height="467.5" fill="#1b1b1b" />
<rect x="603.6" y="997.5" width="9.6" height="293" fill="#2f2f2f" rx="4.8"/>
<path d="M7 908.5H603M7 928.5H603M7 948.5H603M7 968.5H603M7 988.5H603M7 1008.5H603M7 1028.5H603M7 1048.5H603M7 1068.5H603M7 1088.5H603M7 1108.5H603M7 1128.5H603M7 1148.5H603M7 1168.5H603M7 1188.5H603M7 1208.5H603M7 1228.5H603M7 1248.5H603M7 1268.5H603M7 1288.5H603M7 1308.5H603M7 1328.5H603M7 1348.5H603" fill="none" stroke="#262626" stroke-width="1" />
<clipPath id="efclip"><rect x="7" y="900.6" width="596" height="468"/></clipPath>
<g clip-path="url(#efclip)"><path d="M22.2 894.9l3.8 3.6l-3.8 3.6" fill="none" stroke="#a8a8a8" stroke-width="1.3" /><path d="M38 892.3h5.2l1 1.6h7.8v9h-14z" fill="#b4b4b4" /><rect x="38" y="893.8" width="6" height="0.7" fill="#1f1f1f" /><text x="60.6" y="902.7" font-size="12.3" fill="#b2b2b2" textLength="51.2" lengthAdjust="spacing" >图像控制</text>
<path d="M22.2 914.9l3.8 3.6l-3.8 3.6" fill="none" stroke="#a8a8a8" stroke-width="1.3" /><path d="M38 912.3h5.2l1 1.6h7.8v9h-14z" fill="#b4b4b4" /><rect x="38" y="913.8" width="6" height="0.7" fill="#1f1f1f" /><text x="60.6" y="922.7" font-size="12.3" fill="#b2b2b2" textLength="51.2" lengthAdjust="spacing" >实用程序</text>
<path d="M22.2 934.9l3.8 3.6l-3.8 3.6" fill="none" stroke="#a8a8a8" stroke-width="1.3" /><path d="M38 932.3h5.2l1 1.6h7.8v9h-14z" fill="#b4b4b4" /><rect x="38" y="933.8" width="6" height="0.7" fill="#1f1f1f" /><text x="60.6" y="942.7" font-size="12.3" fill="#b2b2b2" textLength="25.4" lengthAdjust="spacing" >扭曲</text>
<path d="M22.2 954.9l3.8 3.6l-3.8 3.6" fill="none" stroke="#a8a8a8" stroke-width="1.3" /><path d="M38 952.3h5.2l1 1.6h7.8v9h-14z" fill="#b4b4b4" /><rect x="38" y="953.8" width="6" height="0.7" fill="#1f1f1f" /><text x="60.6" y="962.7" font-size="12.3" fill="#b2b2b2" textLength="25.4" lengthAdjust="spacing" >时间</text>
<path d="M22.2 974.9l3.8 3.6l-3.8 3.6" fill="none" stroke="#a8a8a8" stroke-width="1.3" /><path d="M38 972.3h5.2l1 1.6h7.8v9h-14z" fill="#b4b4b4" /><rect x="38" y="973.8" width="6" height="0.7" fill="#1f1f1f" /><text x="60.6" y="982.7" font-size="12.3" fill="#b2b2b2" textLength="64.1" lengthAdjust="spacing" >杂色与颗粒</text>
<path d="M22.2 994.9l3.8 3.6l-3.8 3.6" fill="none" stroke="#a8a8a8" stroke-width="1.3" /><path d="M38 992.3h5.2l1 1.6h7.8v9h-14z" fill="#b4b4b4" /><rect x="38" y="993.8" width="6" height="0.7" fill="#1f1f1f" /><text x="60.6" y="1002.7" font-size="12.3" fill="#b2b2b2" textLength="64.1" lengthAdjust="spacing" >模糊与锐化</text>
<path d="M22.2 1014.9l3.8 3.6l-3.8 3.6" fill="none" stroke="#a8a8a8" stroke-width="1.3" /><path d="M38 1012.3h5.2l1 1.6h7.8v9h-14z" fill="#b4b4b4" /><rect x="38" y="1013.8" width="6" height="0.7" fill="#1f1f1f" /><text x="60.6" y="1022.7" font-size="12.3" fill="#b2b2b2" textLength="64.1" lengthAdjust="spacing" >沉浸式视频</text>
<path d="M22.2 1034.9l3.8 3.6l-3.8 3.6" fill="none" stroke="#a8a8a8" stroke-width="1.3" /><path d="M38 1032.3h5.2l1 1.6h7.8v9h-14z" fill="#b4b4b4" /><rect x="38" y="1033.8" width="6" height="0.7" fill="#1f1f1f" /><text x="60.6" y="1042.7" font-size="12.3" fill="#b2b2b2" textLength="25.4" lengthAdjust="spacing" >生成</text>
<path d="M22.2 1054.9l3.8 3.6l-3.8 3.6" fill="none" stroke="#a8a8a8" stroke-width="1.3" /><path d="M38 1052.3h5.2l1 1.6h7.8v9h-14z" fill="#b4b4b4" /><rect x="38" y="1053.8" width="6" height="0.7" fill="#1f1f1f" /><text x="60.6" y="1062.7" font-size="12.3" fill="#b2b2b2" textLength="25.4" lengthAdjust="spacing" >视频</text>
<path d="M22.2 1074.9l3.8 3.6l-3.8 3.6" fill="none" stroke="#a8a8a8" stroke-width="1.3" /><path d="M38 1072.3h5.2l1 1.6h7.8v9h-14z" fill="#b4b4b4" /><rect x="38" y="1073.8" width="6" height="0.7" fill="#1f1f1f" /><text x="60.6" y="1082.7" font-size="12.3" fill="#b2b2b2" textLength="25.4" lengthAdjust="spacing" >调整</text>
<path d="M22.2 1094.9l3.8 3.6l-3.8 3.6" fill="none" stroke="#a8a8a8" stroke-width="1.3" /><path d="M38 1092.3h5.2l1 1.6h7.8v9h-14z" fill="#b4b4b4" /><rect x="38" y="1093.8" width="6" height="0.7" fill="#1f1f1f" /><text x="60.6" y="1102.7" font-size="12.3" fill="#b2b2b2" textLength="25.4" lengthAdjust="spacing" >过时</text>
<path d="M22.2 1114.9l3.8 3.6l-3.8 3.6" fill="none" stroke="#a8a8a8" stroke-width="1.3" /><path d="M38 1112.3h5.2l1 1.6h7.8v9h-14z" fill="#b4b4b4" /><rect x="38" y="1113.8" width="6" height="0.7" fill="#1f1f1f" /><text x="60.6" y="1122.7" font-size="12.3" fill="#b2b2b2" textLength="25.4" lengthAdjust="spacing" >过渡</text>
<path d="M22.2 1134.9l3.8 3.6l-3.8 3.6" fill="none" stroke="#a8a8a8" stroke-width="1.3" /><path d="M38 1132.3h5.2l1 1.6h7.8v9h-14z" fill="#b4b4b4" /><rect x="38" y="1133.8" width="6" height="0.7" fill="#1f1f1f" /><text x="60.6" y="1142.7" font-size="12.3" fill="#b2b2b2" textLength="25.4" lengthAdjust="spacing" >透视</text>
<path d="M22.2 1154.9l3.8 3.6l-3.8 3.6" fill="none" stroke="#a8a8a8" stroke-width="1.3" /><path d="M38 1152.3h5.2l1 1.6h7.8v9h-14z" fill="#b4b4b4" /><rect x="38" y="1153.8" width="6" height="0.7" fill="#1f1f1f" /><text x="60.6" y="1162.7" font-size="12.3" fill="#b2b2b2" textLength="25.4" lengthAdjust="spacing" >通道</text>
<path d="M22.2 1174.9l3.8 3.6l-3.8 3.6" fill="none" stroke="#a8a8a8" stroke-width="1.3" /><path d="M38 1172.3h5.2l1 1.6h7.8v9h-14z" fill="#b4b4b4" /><rect x="38" y="1173.8" width="6" height="0.7" fill="#1f1f1f" /><text x="60.6" y="1182.7" font-size="12.3" fill="#b2b2b2" textLength="25.4" lengthAdjust="spacing" >键控</text>
<path d="M22.2 1194.9l3.8 3.6l-3.8 3.6" fill="none" stroke="#a8a8a8" stroke-width="1.3" /><path d="M38 1192.3h5.2l1 1.6h7.8v9h-14z" fill="#b4b4b4" /><rect x="38" y="1193.8" width="6" height="0.7" fill="#1f1f1f" /><text x="60.6" y="1202.7" font-size="12.3" fill="#b2b2b2" textLength="51.2" lengthAdjust="spacing" >颜色校正</text>
<path d="M22.2 1214.9l3.8 3.6l-3.8 3.6" fill="none" stroke="#a8a8a8" stroke-width="1.3" /><path d="M38 1212.3h5.2l1 1.6h7.8v9h-14z" fill="#b4b4b4" /><rect x="38" y="1213.8" width="6" height="0.7" fill="#1f1f1f" /><text x="60.6" y="1222.7" font-size="12.3" fill="#b2b2b2" textLength="38.3" lengthAdjust="spacing" >风格化</text>
<path d="M11.9 1236.7l3.7 3.8l3.7-3.8" fill="none" stroke="#a8a8a8" stroke-width="1.3" /><path d="M27 1232.3h5.2l1 1.6h7.8v9h-14z" fill="#b4b4b4" /><rect x="27" y="1233.8" width="6" height="0.7" fill="#1f1f1f" /><text x="50" y="1242.7" font-size="12.3" fill="#b2b2b2" textLength="51.2" lengthAdjust="spacing" >视频过渡</text>
<path d="M22.2 1254.9l3.8 3.6l-3.8 3.6" fill="none" stroke="#a8a8a8" stroke-width="1.3" /><path d="M38 1252.3h5.2l1 1.6h7.8v9h-14z" fill="#b4b4b4" /><rect x="38" y="1253.8" width="6" height="0.7" fill="#1f1f1f" /><text x="60.6" y="1262.7" font-size="12.3" fill="#b2b2b2" textLength="25.4" lengthAdjust="spacing" >内滑</text>
<path d="M22.5 1276.7l3.7 3.8l3.7-3.8" fill="none" stroke="#a8a8a8" stroke-width="1.3" /><path d="M38 1272.3h5.2l1 1.6h7.8v9h-14z" fill="#b4b4b4" /><rect x="38" y="1273.8" width="6" height="0.7" fill="#1f1f1f" /><text x="60.6" y="1282.7" font-size="12.3" fill="#b2b2b2" textLength="25.4" lengthAdjust="spacing" >划像</text>
<rect x="52.5" y="1292.4" width="11.4" height="11" fill="#1b1b1b" stroke="#c4c4c4" stroke-width="1"/><path d="M53 1292.9h10.4l-10.4 10z" fill="#c9c9c9" />
<text x="71.9" y="1302.1" font-size="12.3" fill="#b2b2b2" textLength="51.2" lengthAdjust="spacing" >交叉划像</text>
<rect x="411.8" y="1294.3" width="12.4" height="8.4" fill="#c4c4c4" /><rect x="413.54" y="1291.7" width="3.72" height="3" fill="#c4c4c4" /><rect x="418.74" y="1291.7" width="3.72" height="3" fill="#c4c4c4" /><text x="418" y="1301" font-size="6.4" fill="#222" text-anchor="middle" font-weight="bold" textLength="9.4" lengthAdjust="spacingAndGlyphs">YUV</text>
<rect x="7" y="1309" width="595" height="19" fill="#464646" />
<rect x="52.5" y="1312.4" width="11.4" height="11" fill="#3a3a3a" stroke="#c4c4c4" stroke-width="1"/><path d="M53 1312.9h10.4l-10.4 10z" fill="#c9c9c9" />
<text x="71.9" y="1322.1" font-size="12.3" fill="#a8a8a8" textLength="38.3" lengthAdjust="spacing" >圆划像</text>
<rect x="411.8" y="1314.3" width="12.4" height="8.4" fill="#c4c4c4" /><rect x="413.54" y="1311.7" width="3.72" height="3" fill="#c4c4c4" /><rect x="418.74" y="1311.7" width="3.72" height="3" fill="#c4c4c4" /><text x="418" y="1321" font-size="6.4" fill="#222" text-anchor="middle" font-weight="bold" textLength="9.4" lengthAdjust="spacingAndGlyphs">YUV</text>
<rect x="52.5" y="1332.4" width="11.4" height="11" fill="#1b1b1b" stroke="#c4c4c4" stroke-width="1"/><path d="M53 1332.9h10.4l-10.4 10z" fill="#c9c9c9" />
<text x="71.9" y="1342.1" font-size="12.3" fill="#b2b2b2" textLength="51.2" lengthAdjust="spacing" >盒形划像</text>
<rect x="411.8" y="1334.3" width="12.4" height="8.4" fill="#c4c4c4" /><rect x="413.54" y="1331.7" width="3.72" height="3" fill="#c4c4c4" /><rect x="418.74" y="1331.7" width="3.72" height="3" fill="#c4c4c4" /><text x="418" y="1341" font-size="6.4" fill="#222" text-anchor="middle" font-weight="bold" textLength="9.4" lengthAdjust="spacingAndGlyphs">YUV</text>
<rect x="52.5" y="1352.4" width="11.4" height="11" fill="#1b1b1b" stroke="#c4c4c4" stroke-width="1"/><path d="M53 1352.9h10.4l-10.4 10z" fill="#c9c9c9" />
<text x="71.9" y="1362.1" font-size="12.3" fill="#b2b2b2" textLength="51.2" lengthAdjust="spacing" >菱形划像</text>
<rect x="411.8" y="1354.3" width="12.4" height="8.4" fill="#c4c4c4" /><rect x="413.54" y="1351.7" width="3.72" height="3" fill="#c4c4c4" /><rect x="418.74" y="1351.7" width="3.72" height="3" fill="#c4c4c4" /><text x="418" y="1361" font-size="6.4" fill="#222" text-anchor="middle" font-weight="bold" textLength="9.4" lengthAdjust="spacingAndGlyphs">YUV</text></g>
<path d="M561 1373h5l1 1.6h7.2v8.2h-13.2z" fill="#b8b8b8" />
<path d="M587 1374.2h9.4M589.8 1374v-1.4h3.8v1.4M588 1375.4l0.6 7.6h6.2l0.6-7.6M590.2 1376.6v5.2M591.7 1376.6v5.2M593.2 1376.6v5.2" fill="none" stroke="#484848" stroke-width="1" />
</g>
<g id="tools">
<rect x="624" y="845" width="74" height="542.5" fill="#1f1f1f" />
<rect x="690" y="845" width="8" height="542.5" fill="#1c1c1c" />
<rect x="635" y="862.5" width="26.4" height="24" fill="#111111" stroke="#2b2b2b" stroke-width="1"/>
<path d="M643.4 865.6l12.6 11.4l-6.6 1.2l-6 5.6z" fill="#3c9bff" />
<rect x="668.6" y="868.6" width="9.6" height="9.8" fill="none" stroke="#c2c2c2" stroke-width="1.5" stroke-dasharray="2.6 1.8"/>
<path d="M674.2 871.9h5.4v-2.9l6 4.6l-6 4.6v-2.9h-5.4z" fill="#c2c2c2" />
<path d="M688 885v-3.2l-3.2 3.2z" fill="#7a7a7a" />
<rect x="647" y="893.8" width="2.2" height="14.6" fill="#c2c2c2" />
<path d="M638.2 901l7-3.8v2.6h2v2.4h-2v2.6z M658 901l-7-3.8v2.6h-2v2.4h2v2.6z" fill="#c2c2c2" />
<path d="M659.6 911.4v-3.2l-3.2 3.2z" fill="#7a7a7a" />
<g transform="translate(677.2 901.6) rotate(42)"><rect x="-7" y="-4.2" width="14" height="8.4" fill="#c2c2c2" rx="0.8"/><rect x="-3.8" y="-0.8" width="7.6" height="1.6" fill="#1f1f1f" /><rect x="-0.9" y="-1.8" width="1.8" height="3.6" fill="#1f1f1f" /></g>
<rect x="637.8" y="921" width="2" height="14.4" fill="#c2c2c2" /><rect x="656.4" y="921" width="2" height="14.4" fill="#c2c2c2" />
<path d="M641.2 928.2l5-3.6v2.5h4v-2.5l5 3.6l-5 3.6v-2.5h-4v2.5z" fill="#c2c2c2" />
<path d="M660 938.4v-3.2l-3.2 3.2z" fill="#7a7a7a" />
<g transform="translate(677.2 928.4) rotate(42) scale(0.88)"><rect x="-3.4" y="-10.6" width="6.8" height="4" fill="#c2c2c2" /><path d="M-3.6 -5.6h7.2l1.8 6.8l-5 9.4h-0.8l-5-9.4z" fill="#c2c2c2" /><path d="M0 10v-8" fill="none" stroke="#1f1f1f" stroke-width="1" /><circle cx="0" cy="1.4" r="1.2" fill="#1f1f1f" /></g>
<rect x="640.4" y="948.7" width="15.6" height="13" fill="#484848" stroke="#c2c2c2" stroke-width="1.2"/>
<path d="M659.6 965.4v-3.2l-3.2 3.2z" fill="#7a7a7a" />
<path d="M672.6 962.6c-1.6-2.6-2.8-4.6-3.6-6c-0.6-1.2 0.8-2 1.8-1l2.2 2.4l-1.2-6.6c-0.2-1.4 1.6-1.8 2-0.4l1.4 5l0.2-7c0-1.4 2-1.4 2.1 0l0.5 6.8l1.5-6c0.4-1.3 2.2-0.9 2 0.5l-0.9 6.5l1.9-3.7c0.7-1.2 2.3-0.4 1.9 0.8c-0.8 2.6-1.6 5.2-2.8 7.4c-0.6 1-1.4 1.5-2.4 1.5h-4.4c-1 0-1.7-0.4-2.2-1.2z" fill="#c2c2c2" />
<path d="M688.4 965.4v-3.2l-3.2 3.2z" fill="#7a7a7a" />
<path d="M640.8 975h14.4v3.6h-1.3l-0.6-1.7h-4v10l1.9 0.5v1.4h-6.4v-1.4l1.9-0.5v-10h-4l-0.6 1.7h-1.3z" fill="#c2c2c2" />
<path d="M659.6 992.6v-3.2l-3.2 3.2z" fill="#7a7a7a" />
</g>
<g id="timeline">
<rect x="702" y="845" width="1672" height="543" fill="#1f1f1f" />
<rect x="703.5" y="918" width="1669" height="469" fill="#191919" />
<text x="730.6" y="862.7" font-size="12.4" fill="#9e9e9e" textLength="26" lengthAdjust="spacing" >序列</text>
<text x="759.6" y="862.7" font-size="10.8" fill="#9e9e9e" textLength="11.8" lengthAdjust="spacingAndGlyphs" >01</text>
<path d="M813 857.4l4.8 4.8M817.8 857.4l-4.8 4.8" fill="none" stroke="#9a9a9a" stroke-width="1.1" />
<text x="830.6" y="862.7" font-size="12.4" fill="#dedede" textLength="26" lengthAdjust="spacing" >序列</text>
<text x="859.6" y="862.7" font-size="10.8" fill="#dedede" textLength="11.8" lengthAdjust="spacingAndGlyphs" >01</text>
<rect x="883.6" y="856.3" width="9" height="1.2" fill="#d0d0d0" /><rect x="883.6" y="859.7" width="9" height="1.2" fill="#d0d0d0" /><rect x="883.6" y="863.1" width="9" height="1.2" fill="#d0d0d0" />
<rect x="813" y="868.8" width="79" height="2.2" fill="#e2e2e2" />
<text x="720" y="891.9" font-size="16" fill="#2d8ceb" textLength="86.4" lengthAdjust="spacing" stroke="#2d8ceb" stroke-width="0.55">00;01;41;13</text>
<path d="M731 901.4v13M724.6 908h13M726.4 903.4l9.2 9.2M735.6 903.4l-9.2 9.2" fill="none" stroke="#2f86e0" stroke-width="1.3" stroke-dasharray="3.4 1.6"/>
<circle cx="731" cy="908" r="1.6" fill="#1f1f1f" />
<path d="M761.2 913v-5.2a3.8 3.8 0 0 1 7.6 0v5.2" fill="none" stroke="#2f86e0" stroke-width="3" />
<rect x="759.6" y="911.4" width="3.2" height="1.8" fill="#16457a" /><rect x="767.2" y="911.4" width="3.2" height="1.8" fill="#16457a" />
<rect x="792" y="902" width="5" height="5" fill="#2f86e0" /><rect x="792.6" y="908.6" width="3.8" height="4.6" fill="none" stroke="#2f86e0" stroke-width="1.2"/>
<path d="M798 902h8.4l-2.6 3.4l2.6 4.6l-3.6-1.2l-4.8 5.6z" fill="#2f86e0" />
<path d="M830 904.4h7.2v5l-3.6 3.6l-3.6-3.6z" fill="#c4c4c4" />
<path d="M-6.6 -5.6 a4.2 4.2 0 0 0 5.2 5.6 l6.2 6.6 a1.5 1.5 0 0 0 2.4 -2.2 l-6.4 -6.4 a4.2 4.2 0 0 0 -5.4 -5.4 l2.6 2.6 l-0.6 2.2 l-2.2 0.6 z" fill="#c4c4c4" transform="translate(867.2 908.2) scale(1.0)"/>
<rect x="893.2" y="903.2" width="15.2" height="9.4" fill="#4a4a4a" rx="2"/>
<text x="895.2" y="911" font-size="8.2" fill="#262626" textLength="11.4" lengthAdjust="spacingAndGlyphs" font-weight="bold" >CC</text>
<rect x="938" y="918" width="1" height="444" fill="#303030" />
<clipPath id="tlclip"><rect x="938.6" y="872" width="1412" height="492"/></clipPath>
<g clip-path="url(#tlclip)"><text x="928.6" y="900.1" font-size="10.4" fill="#9c9c9c" textLength="56.8" lengthAdjust="spacing" >00;01;18;04</text>
<text x="1018.2" y="900.1" font-size="10.4" fill="#9c9c9c" textLength="56.8" lengthAdjust="spacing" >00;01;20;04</text>
<text x="1107.8" y="900.1" font-size="10.4" fill="#9c9c9c" textLength="56.8" lengthAdjust="spacing" >00;01;22;04</text>
<text x="1197.4" y="900.1" font-size="10.4" fill="#9c9c9c" textLength="56.8" lengthAdjust="spacing" >00;01;24;04</text>
<text x="1287" y="900.1" font-size="10.4" fill="#9c9c9c" textLength="56.8" lengthAdjust="spacing" >00;01;26;04</text>
<text x="1376.6" y="900.1" font-size="10.4" fill="#9c9c9c" textLength="56.8" lengthAdjust="spacing" >00;01;28;04</text>
<text x="1466.2" y="900.1" font-size="10.4" fill="#9c9c9c" textLength="56.8" lengthAdjust="spacing" >00;01;30;04</text>
<text x="1555.8" y="900.1" font-size="10.4" fill="#9c9c9c" textLength="56.8" lengthAdjust="spacing" >00;01;32;04</text>
<text x="1645.4" y="900.1" font-size="10.4" fill="#9c9c9c" textLength="56.8" lengthAdjust="spacing" >00;01;34;04</text>
<text x="1735" y="900.1" font-size="10.4" fill="#9c9c9c" textLength="56.8" lengthAdjust="spacing" >00;01;36;04</text>
<text x="1824.6" y="900.1" font-size="10.4" fill="#9c9c9c" textLength="56.8" lengthAdjust="spacing" >00;01;38;04</text>
<text x="1914.2" y="900.1" font-size="10.4" fill="#9c9c9c" textLength="56.8" lengthAdjust="spacing" >00;01;40;04</text>
<text x="2003.8" y="900.1" font-size="10.4" fill="#9c9c9c" textLength="56.8" lengthAdjust="spacing" >00;01;42;04</text>
<text x="2093.4" y="900.1" font-size="10.4" fill="#9c9c9c" textLength="56.8" lengthAdjust="spacing" >00;01;44;04</text>
<text x="2183" y="900.1" font-size="10.4" fill="#9c9c9c" textLength="56.8" lengthAdjust="spacing" >00;01;46;04</text>
<text x="2272.6" y="900.1" font-size="10.4" fill="#9c9c9c" textLength="56.8" lengthAdjust="spacing" >00;01;48;04</text>
<path d="M939.5 909.4V916M945.5 909.4V916M951.5 909.4V916M962.5 909.4V916M968.5 909.4V916M974.5 909.4V916M980.5 909.4V916M986.5 909.4V916M992.5 909.4V916M998.5 909.4V916M1004.5 909.4V916M1010.5 909.4V916M1016.5 909.4V916M1022.5 909.4V916M1028.5 909.4V916M1034.5 909.4V916M1040.5 909.4V916M1052.5 909.4V916M1058.5 909.4V916M1064.5 909.4V916M1070.5 909.4V916M1076.5 909.4V916M1082.5 909.4V916M1088.5 909.4V916M1094.5 909.4V916M1100.5 909.4V916M1106.5 909.4V916M1112.5 909.4V916M1118.5 909.4V916M1124.5 909.4V916M1130.5 909.4V916M1142.5 909.4V916M1148.5 909.4V916M1154.5 909.4V916M1160.5 909.4V916M1166.5 909.4V916M1172.5 909.4V916M1178.5 909.4V916M1183.5 909.4V916M1189.5 909.4V916M1195.5 909.4V916M1201.5 909.4V916M1207.5 909.4V916M1213.5 909.4V916M1219.5 909.4V916M1231.5 909.4V916M1237.5 909.4V916M1243.5 909.4V916M1249.5 909.4V916M1255.5 909.4V916M1261.5 909.4V916M1267.5 909.4V916M1273.5 909.4V916M1279.5 909.4V916M1285.5 909.4V916M1291.5 909.4V916M1297.5 909.4V916M1303.5 909.4V916M1309.5 909.4V916M1321.5 909.4V916M1327.5 909.4V916M1333.5 909.4V916M1339.5 909.4V916M1345.5 909.4V916M1351.5 909.4V916M1357.5 909.4V916M1363.5 909.4V916M1369.5 909.4V916M1375.5 909.4V916M1381.5 909.4V916M1387.5 909.4V916M1393.5 909.4V916M1399.5 909.4V916M1410.5 909.4V916M1416.5 909.4V916M1422.5 909.4V916M1428.5 909.4V916M1434.5 909.4V916M1440.5 909.4V916M1446.5 909.4V916M1452.5 909.4V916M1458.5 909.4V916M1464.5 909.4V916M1470.5 909.4V916M1476.5 909.4V916M1482.5 909.4V916M1488.5 909.4V916M1500.5 909.4V916M1506.5 909.4V916M1512.5 909.4V916M1518.5 909.4V916M1524.5 909.4V916M1530.5 909.4V916M1536.5 909.4V916M1542.5 909.4V916M1548.5 909.4V916M1554.5 909.4V916M1560.5 909.4V916M1566.5 909.4V916M1572.5 909.4V916M1578.5 909.4V916M1590.5 909.4V916M1596.5 909.4V916M1602.5 909.4V916M1608.5 909.4V916M1614.5 909.4V916M1620.5 909.4V916M1626.5 909.4V916M1631.5 909.4V916M1637.5 909.4V916M1643.5 909.4V916M1649.5 909.4V916M1655.5 909.4V916M1661.5 909.4V916M1667.5 909.4V916M1679.5 909.4V916M1685.5 909.4V916M1691.5 909.4V916M1697.5 909.4V916M1703.5 909.4V916M1709.5 909.4V916M1715.5 909.4V916M1721.5 909.4V916M1727.5 909.4V916M1733.5 909.4V916M1739.5 909.4V916M1745.5 909.4V916M1751.5 909.4V916M1757.5 909.4V916M1769.5 909.4V916M1775.5 909.4V916M1781.5 909.4V916M1787.5 909.4V916M1793.5 909.4V916M1799.5 909.4V916M1805.5 909.4V916M1811.5 909.4V916M1817.5 909.4V916M1823.5 909.4V916M1829.5 909.4V916M1835.5 909.4V916M1841.5 909.4V916M1847.5 909.4V916M1858.5 909.4V916M1864.5 909.4V916M1870.5 909.4V916M1876.5 909.4V916M1882.5 909.4V916M1888.5 909.4V916M1894.5 909.4V916M1900.5 909.4V916M1906.5 909.4V916M1912.5 909.4V916M1918.5 909.4V916M1924.5 909.4V916M1930.5 909.4V916M1936.5 909.4V916M1948.5 909.4V916M1954.5 909.4V916M1960.5 909.4V916M1966.5 909.4V916M1972.5 909.4V916M1978.5 909.4V916M1984.5 909.4V916M1990.5 909.4V916M1996.5 909.4V916M2002.5 909.4V916M2008.5 909.4V916M2014.5 909.4V916M2020.5 909.4V916M2026.5 909.4V916M2038.5 909.4V916M2044.5 909.4V916M2050.5 909.4V916M2056.5 909.4V916M2062.5 909.4V916M2068.5 909.4V916M2074.5 909.4V916M2079.5 909.4V916M2085.5 909.4V916M2091.5 909.4V916M2097.5 909.4V916M2103.5 909.4V916M2109.5 909.4V916M2115.5 909.4V916M2127.5 909.4V916M2133.5 909.4V916M2139.5 909.4V916M2145.5 909.4V916M2151.5 909.4V916M2157.5 909.4V916M2163.5 909.4V916M2169.5 909.4V916M2175.5 909.4V916M2181.5 909.4V916M2187.5 909.4V916M2193.5 909.4V916M2199.5 909.4V916M2205.5 909.4V916M2217.5 909.4V916M2223.5 909.4V916M2229.5 909.4V916M2235.5 909.4V916M2241.5 909.4V916M2247.5 909.4V916M2253.5 909.4V916M2259.5 909.4V916M2265.5 909.4V916M2271.5 909.4V916M2277.5 909.4V916M2283.5 909.4V916M2289.5 909.4V916M2295.5 909.4V916M2306.5 909.4V916M2312.5 909.4V916M2318.5 909.4V916M2324.5 909.4V916M2330.5 909.4V916M2336.5 909.4V916M2342.5 909.4V916M2348.5 909.4V916" fill="none" stroke="#5c5c5c" stroke-width="1" />
<path d="M956.5 903.6V916M1046.5 903.6V916M1136.5 903.6V916M1225.5 903.6V916M1315.5 903.6V916M1404.5 903.6V916M1494.5 903.6V916M1584.5 903.6V916M1673.5 903.6V916M1763.5 903.6V916M1852.5 903.6V916M1942.5 903.6V916M2032.5 903.6V916M2121.5 903.6V916M2211.5 903.6V916M2300.5 903.6V916" fill="none" stroke="#707070" stroke-width="1" />
<rect x="1823" y="873" width="1.2" height="43" fill="#8a8a8a" />
<rect x="938.6" y="916" width="1412" height="2.2" fill="#f4f410" />
<rect x="1245.4" y="916" width="173.4" height="2.2" fill="#e8281c" />
<rect x="1530.6" y="916" width="181.4" height="2.2" fill="#e8281c" />
<rect x="939" y="989" width="520" height="24" fill="#7aa4db" />
<rect x="1149.9" y="992.9" width="10" height="9.4" fill="#6e6a60" stroke="#a9c2e4" stroke-width="1"/><text x="1151.2" y="1000.4" font-size="8.6" fill="#3a3630" textLength="7.6" lengthAdjust="spacingAndGlyphs" font-style="italic">fx</text><text x="1168.4" y="1001.4" font-size="9.9" fill="#121a2a" textLength="66.4" lengthAdjust="spacingAndGlyphs" stroke="#121a2a" stroke-width="0.25">BQ9A2222.MOV</text>
<rect x="1331" y="989" width="1.2" height="24" fill="#1c3356" />
<rect x="1245.4" y="995.4" width="173" height="12" fill="#b7a777" stroke="#4e4838" stroke-width="1"/>
<path d="M1290 1006.4L1418 996.4" fill="none" stroke="#d9c96a" stroke-width="1.1" />
<rect x="1331" y="995" width="1.2" height="13" fill="#4e5a50" />
<text x="1249.6" y="1006" font-size="10.6" fill="#141414" textLength="43.4" lengthAdjust="spacing" >交叉划像</text>
<rect x="1429.3" y="992.9" width="10" height="9.4" fill="#6e6a60" stroke="#a9c2e4" stroke-width="1"/><text x="1430.6" y="1000.4" font-size="8.6" fill="#3a3630" textLength="7.6" lengthAdjust="spacingAndGlyphs" font-style="italic">fx</text>
<rect x="1880" y="989" width="470" height="24" fill="#eaeaea" />
<rect x="1884.4" y="992.4" width="465.6" height="17.4" fill="#7aa4db" />
<rect x="1891.1" y="992.9" width="10" height="9.4" fill="#6e6a60" stroke="#a9c2e4" stroke-width="1"/><text x="1892.4" y="1000.4" font-size="8.6" fill="#3a3630" textLength="7.6" lengthAdjust="spacingAndGlyphs" font-style="italic">fx</text><text x="1909.4" y="1001.4" font-size="9.9" fill="#121a2a" textLength="66.4" lengthAdjust="spacingAndGlyphs" stroke="#121a2a" stroke-width="0.25">BQ9A2222.MOV</text>
<rect x="939" y="1014" width="1411" height="24" fill="#7aa4db" />
<rect x="1436.1" y="1017.9" width="10" height="9.4" fill="#6e6a60" stroke="#a9c2e4" stroke-width="1"/><text x="1437.4" y="1025.4" font-size="8.6" fill="#3a3630" textLength="7.6" lengthAdjust="spacingAndGlyphs" font-style="italic">fx</text><text x="1453.8" y="1026.4" font-size="9.9" fill="#121a2a" textLength="66.4" lengthAdjust="spacingAndGlyphs" stroke="#121a2a" stroke-width="0.25">BQ9A2222.MOV</text>
<rect x="1621.4" y="1014" width="1.2" height="24" fill="#1c3356" />
<rect x="1531.4" y="1020.4" width="180.4" height="12" fill="#b7a777" stroke="#4e4838" stroke-width="1"/>
<path d="M1568 1031.4L1711 1021.4" fill="none" stroke="#d9c96a" stroke-width="1.1" />
<rect x="1621.4" y="1020" width="1.2" height="13" fill="#4e5a50" />
<text x="1535.6" y="1031" font-size="10.6" fill="#141414" textLength="32.4" lengthAdjust="spacing" >圆划像</text>
<rect x="1721.9" y="1017.9" width="10" height="9.4" fill="#6e6a60" stroke="#a9c2e4" stroke-width="1"/><text x="1723.2" y="1025.4" font-size="8.6" fill="#3a3630" textLength="7.6" lengthAdjust="spacingAndGlyphs" font-style="italic">fx</text><text x="1740" y="1026.4" font-size="9.9" fill="#121a2a" textLength="66.4" lengthAdjust="spacingAndGlyphs" stroke="#121a2a" stroke-width="0.25">BQ9A2222.MOV</text>
<rect x="939" y="1039" width="1411" height="24" fill="#7aa4db" />
<rect x="948.5" y="1042.9" width="10" height="9.4" fill="#6e6a60" stroke="#a9c2e4" stroke-width="1"/><text x="949.8" y="1050.4" font-size="8.6" fill="#3a3630" textLength="7.6" lengthAdjust="spacingAndGlyphs" font-style="italic">fx</text><text x="967" y="1051.4" font-size="9.9" fill="#121a2a" textLength="66.4" lengthAdjust="spacingAndGlyphs" stroke="#121a2a" stroke-width="0.25">BQ9A2222.MOV</text>
<rect x="939" y="1064" width="1411" height="24" fill="#7aa4db" />
<rect x="948.5" y="1067.9" width="10" height="9.4" fill="#6e6a60" stroke="#a9c2e4" stroke-width="1"/><text x="949.8" y="1075.4" font-size="8.6" fill="#3a3630" textLength="7.6" lengthAdjust="spacingAndGlyphs" font-style="italic">fx</text><text x="967" y="1076.4" font-size="9.9" fill="#121a2a" textLength="81" lengthAdjust="spacingAndGlyphs" stroke="#121a2a" stroke-width="0.25">BQ9A2231.MOV [V]</text>
<rect x="939" y="1114" width="1411" height="24" fill="#7aa4db" />
<rect x="948.5" y="1117.9" width="10" height="9.4" fill="#6e6a60" stroke="#a9c2e4" stroke-width="1"/><text x="949.8" y="1125.4" font-size="8.6" fill="#3a3630" textLength="7.6" lengthAdjust="spacingAndGlyphs" font-style="italic">fx</text><text x="967" y="1126.4" font-size="9.9" fill="#121a2a" textLength="66.4" lengthAdjust="spacingAndGlyphs" stroke="#121a2a" stroke-width="0.25">BQ9A2222.MOV</text>
<rect x="939" y="1013" width="1411" height="1.1" fill="#16243c" />
<rect x="939" y="1038" width="1411" height="1.1" fill="#16243c" />
<rect x="939" y="1063" width="1411" height="1.1" fill="#16243c" />
<rect x="1459" y="1013" width="421" height="1.1" fill="#191919" />
<rect x="939" y="988" width="1411" height="1" fill="#262626" />
<rect x="939" y="1088.4" width="1411" height="1" fill="#262626" />
<rect x="939" y="1113.4" width="1411" height="1" fill="#262626" />
<rect x="1459" y="988" width="421" height="1" fill="#2a2a2a" />
<rect x="939" y="1138.4" width="1411" height="4.6" fill="#2e2c28" />
<rect x="939" y="1167.6" width="1411" height="1" fill="#292929" />
<rect x="939" y="1192.6" width="1411" height="1" fill="#292929" />
<rect x="939" y="1217.6" width="1411" height="1" fill="#292929" />
<rect x="939" y="1242.6" width="1411" height="1" fill="#292929" />
<rect x="939" y="1267.6" width="1411" height="1" fill="#292929" />
<rect x="939" y="1193" width="1411" height="24.4" fill="#3e5676" />
<path d="M1132 1204.6L1132 1204.5L1133.5 1204.3L1135.0 1203.9L1136.5 1203.5L1138.0 1203.1L1139.5 1203L1141.0 1201.4L1142.5 1201.5L1144.0 1199.3L1145.5 1199.3L1147.0 1200L1148.5 1199.2L1150 1199.3L1151.5 1197.1L1153.0 1197.3L1154.5 1198.5L1156.0 1200.2L1157.5 1200.7L1159.0 1201L1160.5 1201.3L1162.0 1202.3L1163.5 1202.9L1165.0 1203.6L1166.5 1204L1168.0 1203.8L1169.5 1203.4L1171.0 1202L1172.5 1201.5L1174.0 1200.6L1175.5 1199.8L1177.0 1199.7L1178.5 1198.4L1180.0 1198.2L1181.5 1196.3L1183.0 1196.7L1184.5 1196.8L1186.0 1196.2L1187.5 1198.6L1189.0 1198.9L1190.5 1199.8L1192.0 1201.2L1193.5 1200.9L1195.0 1201.9L1196.5 1202.1L1198.0 1202.9L1199.5 1203.4L1200 1204L1201.5 1204L1203.0 1203.4L1204.5 1203.2L1206.0 1202.8L1207.5 1202L1209.0 1201.7L1210.5 1201L1212.0 1200.1L1213.5 1199.1L1215.0 1198.8L1216.5 1200.1L1218.0 1198.6L1219.5 1198.3L1221.0 1199.5L1222.5 1199.6L1224.0 1201.1L1225.5 1201.6L1227.0 1202.3L1228.5 1202.6L1230.0 1202.7L1231.5 1202.6L1233.0 1203.4L1234.5 1203.9L1236.0 1204.2L1237.5 1203.9L1239.0 1203.7L1240.5 1203.6L1242.0 1203.1L1243.5 1202.7L1245.0 1201.1L1246.5 1201.6L1248.0 1201.8L1249.5 1199.5L1251.0 1199.1L1252.5 1199.7L1254.0 1198.9L1255.5 1198.8L1257.0 1200.2L1258.5 1199.3L1260.0 1199.9L1261.5 1200.7L1263.0 1201.7L1264.5 1202.8L1266.0 1203.2L1267.5 1203.3L1269.0 1203.9L1270.5 1204.1L1272.0 1203.9L1273.5 1203.7L1275.0 1203.4L1276.5 1202.3L1278.0 1201.9L1279.5 1200.8L1281.0 1200.5L1282.5 1199.8L1284.0 1200.1L1285.5 1199.4L1287.0 1199.2L1288.5 1200.1L1290.0 1199.5L1291.5 1201.1L1293.0 1201.8L1294.5 1201.6L1296.0 1201.8L1297.5 1202.6L1299.0 1203.2L1300.5 1203.8L1302.0 1204.2L1303.5 1204.1L1305.0 1203.8L1306.5 1203.7L1308.0 1203.4L1309.5 1202.7L1311.0 1202.4L1312.5 1201.5L1314.0 1201.5L1315.5 1200.5L1317.0 1200L1318.5 1200.4L1320.0 1201.5L1321.5 1201.6L1323.0 1200.5L1324.5 1200.9L1326.0 1201.1L1327.5 1201.4L1329.0 1201.5L1330.5 1202L1332.0 1202.7L1333.5 1203.1L1335 1204L1336.5 1204.3L1338.0 1204.5L1339.5 1204.5L1341.0 1204.5L1342.5 1204.3L1344.0 1204.2L1345 1203.4L1346.5 1202L1348.0 1202.3L1349.5 1201.9L1351.0 1202L1352.5 1201.3L1354.0 1200.6L1355.5 1200.7L1357.0 1201.7L1358.5 1201L1360.0 1201L1361.5 1201.8L1363.0 1202.1L1364.5 1202.8L1366.0 1203.3L1367.5 1203.7L1369.0 1204.1L1370.5 1204.3L1372.0 1204.4L1373.5 1204.2L1375.0 1203.8L1376.5 1203.2L1378.0 1203.3L1379.5 1202.7L1381.0 1202.9L1382.5 1201.8L1384.0 1202.1L1385.5 1201L1387.0 1200.8L1388.5 1201.8L1390.0 1201.5L1391.5 1200.5L1393.0 1200.5L1394.5 1200.5L1396.0 1200.7L1397.5 1201.7L1399.0 1201.6L1400.5 1202.7L1402.0 1203.1L1403.5 1203.5L1405.0 1203.8L1406.5 1204L1408.0 1204.3L1409.5 1204.4L1411.0 1204.3L1412.5 1204.2L1414.0 1203.6L1415.5 1203.2L1417.0 1203.1L1418.5 1202.4L1420.0 1201.3L1421.5 1201.3L1423.0 1200.3L1424.5 1200.1L1426.0 1200.4L1427.5 1201.1L1429.0 1201.8L1430.5 1201.1L1432.0 1201.9L1433.5 1201.4L1435.0 1201.8L1436.5 1202.6L1438.0 1203L1439.5 1203.3L1440 1202.8L1441.5 1203.5L1443.0 1204L1444.5 1204.1L1446.0 1203.8L1447.5 1203.3L1449.0 1202.7L1450.5 1202.4L1452.0 1201.8L1453.5 1201.9L1455.0 1201.2L1456.5 1199.7L1458.0 1198.3L1459.5 1196.6L1461.0 1197.8L1462.5 1198.8L1464.0 1197.5L1465.5 1196.6L1467.0 1197.4L1468.5 1197.9L1470 1200.4L1471.5 1201.3L1473.0 1202.1L1474.5 1202.9L1476.0 1203.6L1477.5 1204.1L1479.0 1204.3L1480.5 1204.1L1482.0 1203.8L1483.5 1203.4L1485.0 1203.4L1486.5 1202.4L1488.0 1201.9L1489.5 1202.3L1491.0 1201.9L1492.5 1201.7L1494.0 1201.6L1495.5 1200.2L1497.0 1200.9L1498.5 1200.7L1500.0 1201.1L1501.5 1202.2L1503.0 1202.5L1504.5 1202.9L1506.0 1203.4L1507.5 1203.6L1509.0 1203.8L1510.5 1204.2L1512.0 1204.3L1513.5 1204.3L1515.0 1204L1516.5 1203.2L1518.0 1203.1L1519.5 1202.2L1521.0 1202.5L1522.5 1201.6L1524.0 1201.6L1525.5 1201.6L1527.0 1202.1L1528.5 1201.8L1530 1203.3L1531.5 1203.9L1533.0 1204.2L1534.5 1204.3L1536.0 1204.4L1537.5 1204.4L1539.0 1204.4L1540.5 1204.4L1542.0 1204.5L1543.5 1204.5L1545.0 1204.6L1546.5 1204.6L1548.0 1204.5L1549.5 1204.5L1551.0 1204.5L1552.5 1204.4L1554.0 1204.3L1555.5 1204.4L1557.0 1204.4L1558.5 1204.2L1560.0 1204.2L1561.5 1204.1L1563.0 1204.2L1564.5 1204.3L1566.0 1204.3L1567.5 1204.3L1569.0 1204.4L1570 1203.3L1571.5 1203L1573.0 1202.9L1574.5 1203.6L1576.0 1204.1L1577.5 1204.2L1579.0 1204.2L1580.5 1203.6L1582.0 1203.5L1583.5 1202.3L1585.0 1202.5L1586.5 1202.5L1588.0 1202.4L1589.5 1201.9L1591.0 1200.4L1592.5 1200.7L1594.0 1200.6L1595.5 1201L1597.0 1201.3L1598.5 1201.9L1600 1201.7L1601.5 1202.4L1603.0 1202.8L1604.5 1203L1606.0 1203.1L1607.5 1203.8L1609.0 1204L1610.5 1204.3L1612.0 1204.3L1613.5 1203.9L1615.0 1203.4L1616.5 1203.3L1618.0 1203.2L1619.5 1202.3L1621.0 1201.6L1622.5 1201L1624.0 1201.1L1625.5 1200.6L1627.0 1200.2L1628.5 1201.2L1630.0 1201.6L1631.5 1201.2L1633.0 1202.1L1634.5 1202L1636.0 1202.6L1637.5 1203.2L1639.0 1203.2L1640.5 1203.5L1642.0 1204L1643.5 1204.3L1645.0 1204.2L1646.5 1204.2L1648.0 1203.6L1649.5 1203.5L1651.0 1202.5L1652.5 1202.9L1654.0 1202.3L1655.5 1202.3L1657.0 1201.1L1658.5 1201.6L1660.0 1201.5L1661.5 1201.6L1663.0 1200.9L1664.5 1200.5L1665 1203L1666.5 1203.9L1668.0 1204.2L1669.5 1204.4L1671.0 1204.4L1672.5 1204.5L1674.0 1204.5L1675.5 1204.5L1677.0 1204.6L1678.5 1204.6L1680.0 1204.5L1681.5 1204.5L1683.0 1204.5L1684.5 1204.5L1686.0 1204.5L1687.5 1204.4L1689.0 1204.4L1690.5 1204.4L1692.0 1204.3L1693.5 1204.3L1695.0 1204.3L1696.5 1204.3L1698.0 1204.3L1699.5 1204.4L1701.0 1204.4L1702.5 1204.5L1704.0 1204.5L1705.5 1204.5L1707.0 1204.5L1708.5 1204.6L1710.0 1204.6L1711.5 1204.6L1713.0 1204.6L1714.5 1204.5L1716.0 1204.5L1717.5 1204.5L1719.0 1204.4L1720.5 1204.3L1722.0 1204.4L1723.5 1204.3L1725.0 1204.4L1726.5 1204.3L1728.0 1204.3L1729.5 1204.3L1731.0 1204.4L1732.5 1204.4L1734.0 1204.4L1735.5 1204.5L1737.0 1204.5L1738.5 1204.5L1740.0 1204.5L1741.5 1204.6L1743.0 1204.6L1744.5 1204.6L1746.0 1204.6L1747.5 1204.5L1749.0 1204.5L1750.5 1204.5L1752.0 1204.4L1753.5 1204.4L1755.0 1204.4L1756.5 1204.4L1758.0 1204.3L1759.5 1204.3L1761.0 1204.2L1762.5 1204.3L1764.0 1204.3L1765.5 1204.4L1767.0 1204.4L1768.5 1204.4L1770.0 1204.5L1771.5 1204.5L1773.0 1204.5L1774.5 1204.6L1776.0 1204.6L1777.5 1204.5L1779.0 1204.5L1780.5 1204.5L1782.0 1204.5L1783.5 1204.5L1785.0 1204.4L1786.5 1204.4L1788.0 1204.4L1789.5 1204.4L1790 1201.9L1791.5 1200.2L1793.0 1200.7L1794.5 1200L1796.0 1201L1797.5 1200.2L1799.0 1201.1L1800.5 1200.6L1802.0 1201.4L1803.5 1202.2L1805.0 1202.6L1806.5 1203.5L1808.0 1204L1809.5 1204.2L1811.0 1204.1L1812.5 1203.6L1814.0 1203.6L1815.5 1203L1817.0 1202L1818.5 1201.7L1820.0 1201.4L1821.5 1201.5L1823.0 1200L1824.5 1200.2L1826.0 1199L1827.5 1200.5L1829.0 1199.1L1830.5 1200.8L1832.0 1200.9L1833.5 1200.9L1835.0 1202L1836.5 1202.6L1838.0 1202.6L1839.5 1203.4L1840 1203.8L1841.5 1204.2L1843.0 1204.3L1844.5 1203.9L1846.0 1203.7L1847.5 1203.6L1849.0 1203.2L1850.5 1202.2L1852.0 1201.9L1853.5 1201L1855.0 1200.3L1856.5 1200.4L1858.0 1199.9L1859.5 1200.6L1861.0 1199.7L1862.5 1200.8L1864.0 1201.4L1865.5 1201.2L1867.0 1201.3L1868.5 1202.2L1870.0 1202.8L1871.5 1202.7L1873.0 1203.5L1874.5 1203.9L1876.0 1204.3L1877.5 1203.9L1879.0 1203.4L1880.5 1202.8L1882.0 1202.1L1883.5 1202.3L1885.0 1200.8L1886.5 1201L1888.0 1201.3L1889.5 1200.9L1891.0 1201.1L1892.5 1199.3L1894.0 1200.3L1895.5 1200.7L1897.0 1201.2L1898.5 1200.1L1900.0 1200.3L1901.5 1200.9L1903.0 1201.7L1904.5 1202.6L1906.0 1203.2L1907.5 1203.7L1909.0 1204L1910.5 1204.2L1912.0 1203.9L1913.5 1203.2L1915.0 1202.4L1916.5 1202.4L1918.0 1202.4L1919.5 1201.7L1921.0 1199.5L1922.5 1199.3L1924.0 1200.7L1925.5 1200.9L1927.0 1200.3L1928.5 1199.1L1930.0 1200.4L1931.5 1201.5L1933.0 1201.4L1934.5 1201.6L1936.0 1201.6L1937.5 1202.5L1939.0 1202.9L1940.5 1203.1L1942.0 1203.7L1943.5 1204L1945.0 1204.1L1946.5 1204L1948.0 1203.6L1949.5 1203.2L1951.0 1202.6L1952.5 1201.4L1954.0 1200.3L1955.5 1200.4L1957.0 1200.8L1958.5 1199.5L1960 1200.4L1961.5 1201.4L1963.0 1201L1964.5 1200.9L1966.0 1201.7L1967.5 1202L1969.0 1201.5L1970.5 1201.9L1972.0 1202.1L1973.5 1202.9L1975.0 1203.4L1976.5 1203.9L1978.0 1204.2L1979.5 1204.3L1981.0 1204.3L1982.5 1204.2L1984.0 1204L1985.5 1203.6L1987.0 1203.3L1988.5 1203.3L1990.0 1203.3L1991.5 1203.1L1993.0 1202.1L1994.5 1202.5L1996.0 1202.6L1997.5 1202.2L1999.0 1202.4L2000.5 1202.4L2002.0 1202.7L2003.5 1203L2005.0 1203.4L2006.5 1203.9L2008.0 1204L2009.5 1204.2L2011.0 1204.4L2012 1204.5L2013.5 1204.6L2015.0 1204.6L2016.5 1204.6L2018.0 1204.5L2019.5 1204.5L2021.0 1204.5L2022.5 1204.4L2024.0 1204.4L2025.5 1204.4L2027.0 1204.4L2028.5 1204.4L2030.0 1204.4L2031.5 1204.3L2033.0 1204.4L2034.5 1204.4L2036.0 1204.5L2037.5 1204.4L2039.0 1204.5L2040.5 1204.5L2042.0 1204.5L2043.5 1204.5L2045.0 1204.5L2046.5 1204.6L2048.0 1204.6L2049.5 1204.6L2051.0 1204.6L2052.5 1204.6L2054.0 1204.5L2055.5 1204.5L2057.0 1204.4L2058.5 1204.4L2060.0 1204.4L2061.5 1204.4L2063.0 1204.4L2064.5 1204.3L2066.0 1204.4L2067.5 1204.4L2069.0 1204.4L2070.5 1204.4L2072.0 1204.4L2073.5 1204.4L2075.0 1204.5L2076.5 1204.5L2078.0 1204.5L2079.5 1204.6L2081.0 1204.6L2082.5 1204.6L2084.0 1204.6L2085.5 1204.6L2087.0 1204.5L2088.5 1204.5L2090.0 1204.5L2091.5 1204.4L2093.0 1204.4L2094.5 1204.4L2096.0 1204.4L2097.5 1204.4L2099.0 1204.4L2100.5 1204.4L2102.0 1204.4L2103.5 1204.4L2105.0 1204.4L2106.5 1204.5L2108.0 1204.4L2109.5 1204.4L2111.0 1204.5L2112.5 1204.5L2114.0 1204.5L2115.5 1204.6L2117.0 1204.6L2118.5 1204.6L2120.0 1204.6L2121.5 1204.6L2123.0 1204.5L2124.5 1204.5L2126.0 1204.5L2127.5 1204.5L2129.0 1204.4L2130.5 1204.4L2132.0 1204.4L2133.5 1204.3L2135 1200.2L2136.5 1199.6L2138.0 1199.2L2139.5 1199.9L2141.0 1200L2142.5 1201.3L2144.0 1201.9L2145.5 1202.6L2147.0 1203L2148.5 1203.5L2150.0 1204.1L2151.5 1204L2153.0 1203.9L2154.5 1203.4L2156.0 1202.9L2157.5 1202.4L2159.0 1201.7L2160.5 1201.2L2162.0 1200.9L2163.5 1199.7L2165 1200.8L2166.5 1201L2168.0 1200.9L2169.5 1202.1L2171.0 1202.2L2172.5 1202.3L2174.0 1202.2L2175.5 1202.7L2177.0 1202.7L2178.5 1203.1L2180.0 1203.3L2181.5 1203.8L2183.0 1203.9L2184.5 1204.2L2186.0 1204.4L2187.5 1204.4L2189.0 1204.4L2190.5 1204.2L2192 1204.4L2193.5 1204.4L2195.0 1204.4L2196.5 1204.4L2198.0 1204.4L2199.5 1204.3L2201.0 1204.2L2202.5 1204.3L2204.0 1204.3L2205.5 1204.2L2207.0 1204.3L2208.5 1204.2L2210.0 1204.2L2211.5 1204.3L2212 1201.8L2213.5 1202.6L2215.0 1202.1L2216.5 1203L2218.0 1203.6L2219.5 1203.9L2221.0 1204.2L2222.5 1203.8L2224.0 1203.3L2225.5 1202.6L2227.0 1201.6L2228.5 1200.7L2230.0 1200.3L2231.5 1199.6L2233.0 1198.7L2234.5 1199.7L2236.0 1200.3L2237.5 1200.8L2239.0 1200.7L2240.5 1199.9L2242.0 1199.1L2243.5 1199.1L2245.0 1200L2246.5 1200.4L2248.0 1201.5L2249.5 1202.8L2250 1203.3L2251.5 1203.7L2253.0 1204.1L2254.5 1204.2L2256.0 1204L2257.5 1203.9L2259.0 1203.2L2260.5 1202.4L2262.0 1202.3L2263.5 1201.6L2265.0 1201.7L2266.5 1201.4L2268.0 1201.6L2269.5 1201.5L2271.0 1201.7L2272.5 1200.8L2274.0 1201L2275.5 1201.9L2277.0 1202.1L2278.5 1202.3L2280.0 1202.7L2281.5 1203.2L2283.0 1203.7L2284.5 1204L2286.0 1204.2L2287.5 1204.4L2289.0 1204.3L2290.5 1204.1L2292 1204.4L2293.5 1204.5L2295.0 1204.5L2296.5 1204.5L2298.0 1204.5L2299.5 1204.4L2301.0 1204.4L2302.5 1204.4L2304.0 1204.4L2305.5 1204.4L2307.0 1204.4L2308.5 1204.4L2310.0 1204.4L2311.5 1204.5L2313.0 1204.5L2314.5 1204.5L2316.0 1204.5L2317.5 1204.5L2319.0 1204.6L2320.5 1204.6L2322.0 1204.6L2323.5 1204.6L2325.0 1204.5L2326.5 1204.5L2328.0 1204.5L2329.5 1204.5L2331.0 1204.5L2332.5 1204.5L2334.0 1204.4L2335.5 1204.4L2337.0 1204.4L2338 1201.2L2339.5 1199.6L2341.0 1199.1L2342.5 1201.1L2344.0 1200.7L2345.5 1201.8L2347.0 1201.6L2348.5 1201.7L2350 1204.6z" fill="#7dabe6" /><path d="M1132 1216.8L1132 1216.7L1133.5 1216.5L1135.0 1216.1L1136.5 1215.7L1138.0 1215.3L1139.5 1215.2L1141.0 1213.6L1142.5 1213.7L1144.0 1211.5L1145.5 1211.5L1147.0 1212.2L1148.5 1211.4L1150 1211.5L1151.5 1209.3L1153.0 1209.5L1154.5 1210.7L1156.0 1212.4L1157.5 1212.9L1159.0 1213.2L1160.5 1213.5L1162.0 1214.5L1163.5 1215.1L1165.0 1215.8L1166.5 1216.2L1168.0 1216L1169.5 1215.6L1171.0 1214.2L1172.5 1213.7L1174.0 1212.8L1175.5 1212L1177.0 1211.9L1178.5 1210.6L1180.0 1210.4L1181.5 1208.5L1183.0 1208.9L1184.5 1209L1186.0 1208.4L1187.5 1210.8L1189.0 1211.1L1190.5 1212L1192.0 1213.4L1193.5 1213.1L1195.0 1214.1L1196.5 1214.3L1198.0 1215.1L1199.5 1215.6L1200 1216.2L1201.5 1216.2L1203.0 1215.6L1204.5 1215.4L1206.0 1215L1207.5 1214.2L1209.0 1213.9L1210.5 1213.2L1212.0 1212.3L1213.5 1211.3L1215.0 1211L1216.5 1212.3L1218.0 1210.8L1219.5 1210.5L1221.0 1211.7L1222.5 1211.8L1224.0 1213.3L1225.5 1213.8L1227.0 1214.5L1228.5 1214.8L1230.0 1214.9L1231.5 1214.8L1233.0 1215.6L1234.5 1216.1L1236.0 1216.4L1237.5 1216.1L1239.0 1215.9L1240.5 1215.8L1242.0 1215.3L1243.5 1214.9L1245.0 1213.3L1246.5 1213.8L1248.0 1214L1249.5 1211.7L1251.0 1211.3L1252.5 1211.9L1254.0 1211.1L1255.5 1211L1257.0 1212.4L1258.5 1211.5L1260.0 1212.1L1261.5 1212.9L1263.0 1213.9L1264.5 1215L1266.0 1215.4L1267.5 1215.5L1269.0 1216.1L1270.5 1216.3L1272.0 1216.1L1273.5 1215.9L1275.0 1215.6L1276.5 1214.5L1278.0 1214.1L1279.5 1213L1281.0 1212.7L1282.5 1212L1284.0 1212.3L1285.5 1211.6L1287.0 1211.4L1288.5 1212.3L1290.0 1211.7L1291.5 1213.3L1293.0 1214L1294.5 1213.8L1296.0 1214L1297.5 1214.8L1299.0 1215.4L1300.5 1216L1302.0 1216.4L1303.5 1216.3L1305.0 1216L1306.5 1215.9L1308.0 1215.6L1309.5 1214.9L1311.0 1214.6L1312.5 1213.7L1314.0 1213.7L1315.5 1212.7L1317.0 1212.2L1318.5 1212.6L1320.0 1213.7L1321.5 1213.8L1323.0 1212.7L1324.5 1213.1L1326.0 1213.3L1327.5 1213.6L1329.0 1213.7L1330.5 1214.2L1332.0 1214.9L1333.5 1215.3L1335 1216.2L1336.5 1216.5L1338.0 1216.7L1339.5 1216.7L1341.0 1216.7L1342.5 1216.5L1344.0 1216.4L1345 1215.6L1346.5 1214.2L1348.0 1214.5L1349.5 1214.1L1351.0 1214.2L1352.5 1213.5L1354.0 1212.8L1355.5 1212.9L1357.0 1213.9L1358.5 1213.2L1360.0 1213.2L1361.5 1214L1363.0 1214.3L1364.5 1215L1366.0 1215.5L1367.5 1215.9L1369.0 1216.3L1370.5 1216.5L1372.0 1216.6L1373.5 1216.4L1375.0 1216L1376.5 1215.4L1378.0 1215.5L1379.5 1214.9L1381.0 1215.1L1382.5 1214L1384.0 1214.3L1385.5 1213.2L1387.0 1213L1388.5 1214L1390.0 1213.7L1391.5 1212.7L1393.0 1212.7L1394.5 1212.7L1396.0 1212.9L1397.5 1213.9L1399.0 1213.8L1400.5 1214.9L1402.0 1215.3L1403.5 1215.7L1405.0 1216L1406.5 1216.2L1408.0 1216.5L1409.5 1216.6L1411.0 1216.5L1412.5 1216.4L1414.0 1215.8L1415.5 1215.4L1417.0 1215.3L1418.5 1214.6L1420.0 1213.5L1421.5 1213.5L1423.0 1212.5L1424.5 1212.3L1426.0 1212.6L1427.5 1213.3L1429.0 1214L1430.5 1213.3L1432.0 1214.1L1433.5 1213.6L1435.0 1214L1436.5 1214.8L1438.0 1215.2L1439.5 1215.5L1440 1215L1441.5 1215.7L1443.0 1216.2L1444.5 1216.3L1446.0 1216L1447.5 1215.5L1449.0 1214.9L1450.5 1214.6L1452.0 1214L1453.5 1214.1L1455.0 1213.4L1456.5 1211.9L1458.0 1210.5L1459.5 1208.8L1461.0 1210L1462.5 1211L1464.0 1209.7L1465.5 1208.8L1467.0 1209.6L1468.5 1210.1L1470 1212.6L1471.5 1213.5L1473.0 1214.3L1474.5 1215.1L1476.0 1215.8L1477.5 1216.3L1479.0 1216.5L1480.5 1216.3L1482.0 1216L1483.5 1215.6L1485.0 1215.6L1486.5 1214.6L1488.0 1214.1L1489.5 1214.5L1491.0 1214.1L1492.5 1213.9L1494.0 1213.8L1495.5 1212.4L1497.0 1213.1L1498.5 1212.9L1500.0 1213.3L1501.5 1214.4L1503.0 1214.7L1504.5 1215.1L1506.0 1215.6L1507.5 1215.8L1509.0 1216L1510.5 1216.4L1512.0 1216.5L1513.5 1216.5L1515.0 1216.2L1516.5 1215.4L1518.0 1215.3L1519.5 1214.4L1521.0 1214.7L1522.5 1213.8L1524.0 1213.8L1525.5 1213.8L1527.0 1214.3L1528.5 1214L1530 1215.5L1531.5 1216.1L1533.0 1216.4L1534.5 1216.5L1536.0 1216.6L1537.5 1216.6L1539.0 1216.6L1540.5 1216.6L1542.0 1216.7L1543.5 1216.7L1545.0 1216.8L1546.5 1216.8L1548.0 1216.7L1549.5 1216.7L1551.0 1216.7L1552.5 1216.6L1554.0 1216.5L1555.5 1216.6L1557.0 1216.6L1558.5 1216.4L1560.0 1216.4L1561.5 1216.3L1563.0 1216.4L1564.5 1216.5L1566.0 1216.5L1567.5 1216.5L1569.0 1216.6L1570 1215.5L1571.5 1215.2L1573.0 1215.1L1574.5 1215.8L1576.0 1216.3L1577.5 1216.4L1579.0 1216.4L1580.5 1215.8L1582.0 1215.7L1583.5 1214.5L1585.0 1214.7L1586.5 1214.7L1588.0 1214.6L1589.5 1214.1L1591.0 1212.6L1592.5 1212.9L1594.0 1212.8L1595.5 1213.2L1597.0 1213.5L1598.5 1214.1L1600 1213.9L1601.5 1214.6L1603.0 1215L1604.5 1215.2L1606.0 1215.3L1607.5 1216L1609.0 1216.2L1610.5 1216.5L1612.0 1216.5L1613.5 1216.1L1615.0 1215.6L1616.5 1215.5L1618.0 1215.4L1619.5 1214.5L1621.0 1213.8L1622.5 1213.2L1624.0 1213.3L1625.5 1212.8L1627.0 1212.4L1628.5 1213.4L1630.0 1213.8L1631.5 1213.4L1633.0 1214.3L1634.5 1214.2L1636.0 1214.8L1637.5 1215.4L1639.0 1215.4L1640.5 1215.7L1642.0 1216.2L1643.5 1216.5L1645.0 1216.4L1646.5 1216.4L1648.0 1215.8L1649.5 1215.7L1651.0 1214.7L1652.5 1215.1L1654.0 1214.5L1655.5 1214.5L1657.0 1213.3L1658.5 1213.8L1660.0 1213.7L1661.5 1213.8L1663.0 1213.1L1664.5 1212.7L1665 1215.2L1666.5 1216.1L1668.0 1216.4L1669.5 1216.6L1671.0 1216.6L1672.5 1216.7L1674.0 1216.7L1675.5 1216.7L1677.0 1216.8L1678.5 1216.8L1680.0 1216.7L1681.5 1216.7L1683.0 1216.7L1684.5 1216.7L1686.0 1216.7L1687.5 1216.6L1689.0 1216.6L1690.5 1216.6L1692.0 1216.5L1693.5 1216.5L1695.0 1216.5L1696.5 1216.5L1698.0 1216.5L1699.5 1216.6L1701.0 1216.6L1702.5 1216.7L1704.0 1216.7L1705.5 1216.7L1707.0 1216.7L1708.5 1216.8L1710.0 1216.8L1711.5 1216.8L1713.0 1216.8L1714.5 1216.7L1716.0 1216.7L1717.5 1216.7L1719.0 1216.6L1720.5 1216.5L1722.0 1216.6L1723.5 1216.5L1725.0 1216.6L1726.5 1216.5L1728.0 1216.5L1729.5 1216.5L1731.0 1216.6L1732.5 1216.6L1734.0 1216.6L1735.5 1216.7L1737.0 1216.7L1738.5 1216.7L1740.0 1216.7L1741.5 1216.8L1743.0 1216.8L1744.5 1216.8L1746.0 1216.8L1747.5 1216.7L1749.0 1216.7L1750.5 1216.7L1752.0 1216.6L1753.5 1216.6L1755.0 1216.6L1756.5 1216.6L1758.0 1216.5L1759.5 1216.5L1761.0 1216.4L1762.5 1216.5L1764.0 1216.5L1765.5 1216.6L1767.0 1216.6L1768.5 1216.6L1770.0 1216.7L1771.5 1216.7L1773.0 1216.7L1774.5 1216.8L1776.0 1216.8L1777.5 1216.7L1779.0 1216.7L1780.5 1216.7L1782.0 1216.7L1783.5 1216.7L1785.0 1216.6L1786.5 1216.6L1788.0 1216.6L1789.5 1216.6L1790 1214.1L1791.5 1212.4L1793.0 1212.9L1794.5 1212.2L1796.0 1213.2L1797.5 1212.4L1799.0 1213.3L1800.5 1212.8L1802.0 1213.6L1803.5 1214.4L1805.0 1214.8L1806.5 1215.7L1808.0 1216.2L1809.5 1216.4L1811.0 1216.3L1812.5 1215.8L1814.0 1215.8L1815.5 1215.2L1817.0 1214.2L1818.5 1213.9L1820.0 1213.6L1821.5 1213.7L1823.0 1212.2L1824.5 1212.4L1826.0 1211.2L1827.5 1212.7L1829.0 1211.3L1830.5 1213L1832.0 1213.1L1833.5 1213.1L1835.0 1214.2L1836.5 1214.8L1838.0 1214.8L1839.5 1215.6L1840 1216L1841.5 1216.4L1843.0 1216.5L1844.5 1216.1L1846.0 1215.9L1847.5 1215.8L1849.0 1215.4L1850.5 1214.4L1852.0 1214.1L1853.5 1213.2L1855.0 1212.5L1856.5 1212.6L1858.0 1212.1L1859.5 1212.8L1861.0 1211.9L1862.5 1213L1864.0 1213.6L1865.5 1213.4L1867.0 1213.5L1868.5 1214.4L1870.0 1215L1871.5 1214.9L1873.0 1215.7L1874.5 1216.1L1876.0 1216.5L1877.5 1216.1L1879.0 1215.6L1880.5 1215L1882.0 1214.3L1883.5 1214.5L1885.0 1213L1886.5 1213.2L1888.0 1213.5L1889.5 1213.1L1891.0 1213.3L1892.5 1211.5L1894.0 1212.5L1895.5 1212.9L1897.0 1213.4L1898.5 1212.3L1900.0 1212.5L1901.5 1213.1L1903.0 1213.9L1904.5 1214.8L1906.0 1215.4L1907.5 1215.9L1909.0 1216.2L1910.5 1216.4L1912.0 1216.1L1913.5 1215.4L1915.0 1214.6L1916.5 1214.6L1918.0 1214.6L1919.5 1213.9L1921.0 1211.7L1922.5 1211.5L1924.0 1212.9L1925.5 1213.1L1927.0 1212.5L1928.5 1211.3L1930.0 1212.6L1931.5 1213.7L1933.0 1213.6L1934.5 1213.8L1936.0 1213.8L1937.5 1214.7L1939.0 1215.1L1940.5 1215.3L1942.0 1215.9L1943.5 1216.2L1945.0 1216.3L1946.5 1216.2L1948.0 1215.8L1949.5 1215.4L1951.0 1214.8L1952.5 1213.6L1954.0 1212.5L1955.5 1212.6L1957.0 1213L1958.5 1211.7L1960 1212.6L1961.5 1213.6L1963.0 1213.2L1964.5 1213.1L1966.0 1213.9L1967.5 1214.2L1969.0 1213.7L1970.5 1214.1L1972.0 1214.3L1973.5 1215.1L1975.0 1215.6L1976.5 1216.1L1978.0 1216.4L1979.5 1216.5L1981.0 1216.5L1982.5 1216.4L1984.0 1216.2L1985.5 1215.8L1987.0 1215.5L1988.5 1215.5L1990.0 1215.5L1991.5 1215.3L1993.0 1214.3L1994.5 1214.7L1996.0 1214.8L1997.5 1214.4L1999.0 1214.6L2000.5 1214.6L2002.0 1214.9L2003.5 1215.2L2005.0 1215.6L2006.5 1216.1L2008.0 1216.2L2009.5 1216.4L2011.0 1216.6L2012 1216.7L2013.5 1216.8L2015.0 1216.8L2016.5 1216.8L2018.0 1216.7L2019.5 1216.7L2021.0 1216.7L2022.5 1216.6L2024.0 1216.6L2025.5 1216.6L2027.0 1216.6L2028.5 1216.6L2030.0 1216.6L2031.5 1216.5L2033.0 1216.6L2034.5 1216.6L2036.0 1216.7L2037.5 1216.6L2039.0 1216.7L2040.5 1216.7L2042.0 1216.7L2043.5 1216.7L2045.0 1216.7L2046.5 1216.8L2048.0 1216.8L2049.5 1216.8L2051.0 1216.8L2052.5 1216.8L2054.0 1216.7L2055.5 1216.7L2057.0 1216.6L2058.5 1216.6L2060.0 1216.6L2061.5 1216.6L2063.0 1216.6L2064.5 1216.5L2066.0 1216.6L2067.5 1216.6L2069.0 1216.6L2070.5 1216.6L2072.0 1216.6L2073.5 1216.6L2075.0 1216.7L2076.5 1216.7L2078.0 1216.7L2079.5 1216.8L2081.0 1216.8L2082.5 1216.8L2084.0 1216.8L2085.5 1216.8L2087.0 1216.7L2088.5 1216.7L2090.0 1216.7L2091.5 1216.6L2093.0 1216.6L2094.5 1216.6L2096.0 1216.6L2097.5 1216.6L2099.0 1216.6L2100.5 1216.6L2102.0 1216.6L2103.5 1216.6L2105.0 1216.6L2106.5 1216.7L2108.0 1216.6L2109.5 1216.6L2111.0 1216.7L2112.5 1216.7L2114.0 1216.7L2115.5 1216.8L2117.0 1216.8L2118.5 1216.8L2120.0 1216.8L2121.5 1216.8L2123.0 1216.7L2124.5 1216.7L2126.0 1216.7L2127.5 1216.7L2129.0 1216.6L2130.5 1216.6L2132.0 1216.6L2133.5 1216.5L2135 1212.4L2136.5 1211.8L2138.0 1211.4L2139.5 1212.1L2141.0 1212.2L2142.5 1213.5L2144.0 1214.1L2145.5 1214.8L2147.0 1215.2L2148.5 1215.7L2150.0 1216.3L2151.5 1216.2L2153.0 1216.1L2154.5 1215.6L2156.0 1215.1L2157.5 1214.6L2159.0 1213.9L2160.5 1213.4L2162.0 1213.1L2163.5 1211.9L2165 1213L2166.5 1213.2L2168.0 1213.1L2169.5 1214.3L2171.0 1214.4L2172.5 1214.5L2174.0 1214.4L2175.5 1214.9L2177.0 1214.9L2178.5 1215.3L2180.0 1215.5L2181.5 1216L2183.0 1216.1L2184.5 1216.4L2186.0 1216.6L2187.5 1216.6L2189.0 1216.6L2190.5 1216.4L2192 1216.6L2193.5 1216.6L2195.0 1216.6L2196.5 1216.6L2198.0 1216.6L2199.5 1216.5L2201.0 1216.4L2202.5 1216.5L2204.0 1216.5L2205.5 1216.4L2207.0 1216.5L2208.5 1216.4L2210.0 1216.4L2211.5 1216.5L2212 1214L2213.5 1214.8L2215.0 1214.3L2216.5 1215.2L2218.0 1215.8L2219.5 1216.1L2221.0 1216.4L2222.5 1216L2224.0 1215.5L2225.5 1214.8L2227.0 1213.8L2228.5 1212.9L2230.0 1212.5L2231.5 1211.8L2233.0 1210.9L2234.5 1211.9L2236.0 1212.5L2237.5 1213L2239.0 1212.9L2240.5 1212.1L2242.0 1211.3L2243.5 1211.3L2245.0 1212.2L2246.5 1212.6L2248.0 1213.7L2249.5 1215L2250 1215.5L2251.5 1215.9L2253.0 1216.3L2254.5 1216.4L2256.0 1216.2L2257.5 1216.1L2259.0 1215.4L2260.5 1214.6L2262.0 1214.5L2263.5 1213.8L2265.0 1213.9L2266.5 1213.6L2268.0 1213.8L2269.5 1213.7L2271.0 1213.9L2272.5 1213L2274.0 1213.2L2275.5 1214.1L2277.0 1214.3L2278.5 1214.5L2280.0 1214.9L2281.5 1215.4L2283.0 1215.9L2284.5 1216.2L2286.0 1216.4L2287.5 1216.6L2289.0 1216.5L2290.5 1216.3L2292 1216.6L2293.5 1216.7L2295.0 1216.7L2296.5 1216.7L2298.0 1216.7L2299.5 1216.6L2301.0 1216.6L2302.5 1216.6L2304.0 1216.6L2305.5 1216.6L2307.0 1216.6L2308.5 1216.6L2310.0 1216.6L2311.5 1216.7L2313.0 1216.7L2314.5 1216.7L2316.0 1216.7L2317.5 1216.7L2319.0 1216.8L2320.5 1216.8L2322.0 1216.8L2323.5 1216.8L2325.0 1216.7L2326.5 1216.7L2328.0 1216.7L2329.5 1216.7L2331.0 1216.7L2332.5 1216.7L2334.0 1216.6L2335.5 1216.6L2337.0 1216.6L2338 1213.4L2339.5 1211.8L2341.0 1211.3L2342.5 1213.3L2344.0 1212.9L2345.5 1214L2347.0 1213.8L2348.5 1213.9L2350 1216.8z" fill="#7dabe6" />
<rect x="939" y="1204.2" width="1411" height="1" fill="#a9c4ea" />
<rect x="939" y="1216.4" width="1411" height="1.2" fill="#9dbbe6" />
<rect x="948.5" y="1195.9" width="10" height="9.4" fill="#6e6a60" stroke="#c8c8c8" stroke-width="1"/><text x="949.8" y="1203.4" font-size="8.6" fill="#3a3630" textLength="7.6" lengthAdjust="spacingAndGlyphs" font-style="italic">fx</text>
<rect x="939" y="1362" width="1411" height="1" fill="#2a2a2a" /></g>
<rect x="1991.4" y="905" width="1.4" height="457" fill="#3a8fec" />
<path d="M1986 903.4h12v7l-4.4 4.6h-3.2l-4.4-4.6z" fill="#3a9bff" />
<rect x="704" y="988.5" width="234" height="25" fill="#222222" />
<rect x="704" y="988.5" width="234" height="1" fill="#2e2e2e" />
<rect x="752.8" y="999.4" width="8.4" height="6" fill="#c6c6c6" rx="0.8"/><path d="M754.4 999.4v-2.2a2.4 2.4 0 0 1 4.6-1" fill="none" stroke="#c6c6c6" stroke-width="1.5" /><rect x="756.1" y="1001.2" width="1.8" height="2.6" fill="#222222" />
<text x="776.2" y="1005.2" font-size="10.4" fill="#9a9a9a" textLength="11" lengthAdjust="spacingAndGlyphs" >V6</text>
<rect x="807.25" y="996.45" width="8.2" height="3.2" fill="none" stroke="#c6c6c6" stroke-width="1.3"/><rect x="807.25" y="1001.35" width="8.2" height="3.2" fill="none" stroke="#c6c6c6" stroke-width="1.3"/><path d="M815.6 997.9h2.8v5.6h-2.8" fill="none" stroke="#c6c6c6" stroke-width="1.5" />
<path d="M832.8 1001.7q6.8-7.6 13.6 0q-6.8 7.6-13.6 0z" fill="#c6c6c6" /><circle cx="839.6" cy="1001.7" r="2.9" fill="#222222" /><circle cx="839.6" cy="1001.7" r="1.5" fill="#c6c6c6" />
<rect x="704" y="1013.5" width="234" height="25" fill="#222222" />
<rect x="704" y="1013.5" width="234" height="1" fill="#2e2e2e" />
<rect x="752.8" y="1024.4" width="8.4" height="6" fill="#c6c6c6" rx="0.8"/><path d="M754.4 1024.4v-2.2a2.4 2.4 0 0 1 4.6-1" fill="none" stroke="#c6c6c6" stroke-width="1.5" /><rect x="756.1" y="1026.2" width="1.8" height="2.6" fill="#222222" />
<text x="776.2" y="1030.2" font-size="10.4" fill="#9a9a9a" textLength="11" lengthAdjust="spacingAndGlyphs" >V5</text>
<rect x="807.25" y="1021.45" width="8.2" height="3.2" fill="none" stroke="#c6c6c6" stroke-width="1.3"/><rect x="807.25" y="1026.35" width="8.2" height="3.2" fill="none" stroke="#c6c6c6" stroke-width="1.3"/><path d="M815.6 1022.9h2.8v5.6h-2.8" fill="none" stroke="#c6c6c6" stroke-width="1.5" />
<path d="M832.8 1026.7q6.8-7.6 13.6 0q-6.8 7.6-13.6 0z" fill="#c6c6c6" /><circle cx="839.6" cy="1026.7" r="2.9" fill="#222222" /><circle cx="839.6" cy="1026.7" r="1.5" fill="#c6c6c6" />
<rect x="704" y="1038.5" width="234" height="25" fill="#222222" />
<rect x="704" y="1038.5" width="234" height="1" fill="#2e2e2e" />
<rect x="752.8" y="1049.4" width="8.4" height="6" fill="#c6c6c6" rx="0.8"/><path d="M754.4 1049.4v-2.2a2.4 2.4 0 0 1 4.6-1" fill="none" stroke="#c6c6c6" stroke-width="1.5" /><rect x="756.1" y="1051.2" width="1.8" height="2.6" fill="#222222" />
<text x="776.2" y="1055.2" font-size="10.4" fill="#9a9a9a" textLength="11" lengthAdjust="spacingAndGlyphs" >V4</text>
<rect x="807.25" y="1046.45" width="8.2" height="3.2" fill="none" stroke="#c6c6c6" stroke-width="1.3"/><rect x="807.25" y="1051.35" width="8.2" height="3.2" fill="none" stroke="#c6c6c6" stroke-width="1.3"/><path d="M815.6 1047.9h2.8v5.6h-2.8" fill="none" stroke="#c6c6c6" stroke-width="1.5" />
<path d="M832.8 1051.7q6.8-7.6 13.6 0q-6.8 7.6-13.6 0z" fill="#c6c6c6" /><circle cx="839.6" cy="1051.7" r="2.9" fill="#222222" /><circle cx="839.6" cy="1051.7" r="1.5" fill="#c6c6c6" />
<rect x="704" y="1063.5" width="234" height="25" fill="#222222" />
<rect x="704" y="1063.5" width="234" height="1" fill="#2e2e2e" />
<rect x="752.8" y="1074.4" width="8.4" height="6" fill="#c6c6c6" rx="0.8"/><path d="M754.4 1074.4v-2.2a2.4 2.4 0 0 1 4.6-1" fill="none" stroke="#c6c6c6" stroke-width="1.5" /><rect x="756.1" y="1076.2" width="1.8" height="2.6" fill="#222222" />
<text x="776.2" y="1080.2" font-size="10.4" fill="#9a9a9a" textLength="11" lengthAdjust="spacingAndGlyphs" >V3</text>
<rect x="807.25" y="1071.45" width="8.2" height="3.2" fill="none" stroke="#c6c6c6" stroke-width="1.3"/><rect x="807.25" y="1076.35" width="8.2" height="3.2" fill="none" stroke="#c6c6c6" stroke-width="1.3"/><path d="M815.6 1072.9h2.8v5.6h-2.8" fill="none" stroke="#c6c6c6" stroke-width="1.5" />
<path d="M832.8 1076.7q6.8-7.6 13.6 0q-6.8 7.6-13.6 0z" fill="#c6c6c6" /><circle cx="839.6" cy="1076.7" r="2.9" fill="#222222" /><circle cx="839.6" cy="1076.7" r="1.5" fill="#c6c6c6" />
<rect x="704" y="1088.5" width="234" height="25" fill="#222222" />
<rect x="704" y="1088.5" width="234" height="1" fill="#2e2e2e" />
<rect x="752.8" y="1099.4" width="8.4" height="6" fill="#c6c6c6" rx="0.8"/><path d="M754.4 1099.4v-2.2a2.4 2.4 0 0 1 4.6-1" fill="none" stroke="#c6c6c6" stroke-width="1.5" /><rect x="756.1" y="1101.2" width="1.8" height="2.6" fill="#222222" />
<text x="776.2" y="1105.2" font-size="10.4" fill="#9a9a9a" textLength="11" lengthAdjust="spacingAndGlyphs" >V2</text>
<rect x="807.25" y="1096.45" width="8.2" height="3.2" fill="none" stroke="#c6c6c6" stroke-width="1.3"/><rect x="807.25" y="1101.35" width="8.2" height="3.2" fill="none" stroke="#c6c6c6" stroke-width="1.3"/><path d="M815.6 1097.9h2.8v5.6h-2.8" fill="none" stroke="#c6c6c6" stroke-width="1.5" />
<path d="M832.8 1101.7q6.8-7.6 13.6 0q-6.8 7.6-13.6 0z" fill="#c6c6c6" /><circle cx="839.6" cy="1101.7" r="2.9" fill="#222222" /><circle cx="839.6" cy="1101.7" r="1.5" fill="#c6c6c6" />
<rect x="704" y="1113.5" width="234" height="25" fill="#222222" />
<rect x="704" y="1113.5" width="234" height="1" fill="#2e2e2e" />
<rect x="767.2" y="1114.1" width="32" height="24.4" fill="#0d69a9" />
<rect x="752.8" y="1124.4" width="8.4" height="6" fill="#c6c6c6" rx="0.8"/><path d="M754.4 1124.4v-2.2a2.4 2.4 0 0 1 4.6-1" fill="none" stroke="#c6c6c6" stroke-width="1.5" /><rect x="756.1" y="1126.2" width="1.8" height="2.6" fill="#222222" />
<text x="776.2" y="1130.2" font-size="10.4" fill="#a9cdee" textLength="11" lengthAdjust="spacingAndGlyphs" >V1</text>
<rect x="807.25" y="1121.45" width="8.2" height="3.2" fill="none" stroke="#c6c6c6" stroke-width="1.3"/><rect x="807.25" y="1126.35" width="8.2" height="3.2" fill="none" stroke="#c6c6c6" stroke-width="1.3"/><path d="M815.6 1122.9h2.8v5.6h-2.8" fill="none" stroke="#c6c6c6" stroke-width="1.5" />
<path d="M832.8 1126.7q6.8-7.6 13.6 0q-6.8 7.6-13.6 0z" fill="#c6c6c6" /><circle cx="839.6" cy="1126.7" r="2.9" fill="#222222" /><circle cx="839.6" cy="1126.7" r="1.5" fill="#c6c6c6" />
<rect x="704" y="1138.5" width="234" height="4.6" fill="#2c2c2c" />
<rect x="704" y="1143" width="234" height="25" fill="#222222" />
<rect x="704" y="1167.4" width="234" height="1" fill="#2e2e2e" />
<rect x="767.2" y="1143.4" width="32" height="23.8" fill="#0d69a9" />
<rect x="752.8" y="1153.8" width="8.4" height="6" fill="#c6c6c6" rx="0.8"/><path d="M754.4 1153.8v-2.2a2.4 2.4 0 0 1 4.6-1" fill="none" stroke="#c6c6c6" stroke-width="1.5" /><rect x="756.1" y="1155.6" width="1.8" height="2.6" fill="#222222" />
<text x="776.2" y="1159.8" font-size="10.4" fill="#a9cdee" textLength="11" lengthAdjust="spacingAndGlyphs" >A1</text>
<rect x="807.25" y="1150.75" width="8.2" height="3.2" fill="none" stroke="#c6c6c6" stroke-width="1.3"/><rect x="807.25" y="1155.65" width="8.2" height="3.2" fill="none" stroke="#c6c6c6" stroke-width="1.3"/><path d="M815.6 1152.2h2.8v5.6h-2.8" fill="none" stroke="#c6c6c6" stroke-width="1.5" />
<text x="835.4" y="1159.8" font-size="9.6" fill="#c4c4c4" textLength="8.2" lengthAdjust="spacing" >M</text>
<text x="863.8" y="1159.8" font-size="9.6" fill="#c4c4c4" textLength="5.6" lengthAdjust="spacingAndGlyphs" >S</text>
<rect x="891.2" y="1148.4" width="4.8" height="9.4" fill="#424242" rx="2.4"/><path d="M889.4 1154.4v1a4.2 4.2 0 0 0 8.4 0v-1M893.6 1159.8v2.4M891 1162.4h5.2" fill="none" stroke="#424242" stroke-width="1.1" />
<path d="M922 1149.2h1.6l3.4-2.4v7.2l-3.4-2.4h-1.6z" fill="#c6c6c6" />
<rect x="704" y="1168" width="234" height="25" fill="#222222" />
<rect x="704" y="1192.4" width="234" height="1" fill="#2e2e2e" />
<rect x="767.2" y="1168.4" width="32" height="23.8" fill="#0d69a9" />
<rect x="752.8" y="1178.8" width="8.4" height="6" fill="#c6c6c6" rx="0.8"/><path d="M754.4 1178.8v-2.2a2.4 2.4 0 0 1 4.6-1" fill="none" stroke="#c6c6c6" stroke-width="1.5" /><rect x="756.1" y="1180.6" width="1.8" height="2.6" fill="#222222" />
<text x="776.2" y="1184.8" font-size="10.4" fill="#a9cdee" textLength="11" lengthAdjust="spacingAndGlyphs" >A2</text>
<rect x="807.25" y="1175.75" width="8.2" height="3.2" fill="none" stroke="#c6c6c6" stroke-width="1.3"/><rect x="807.25" y="1180.65" width="8.2" height="3.2" fill="none" stroke="#c6c6c6" stroke-width="1.3"/><path d="M815.6 1177.2h2.8v5.6h-2.8" fill="none" stroke="#c6c6c6" stroke-width="1.5" />
<text x="835.4" y="1184.8" font-size="9.6" fill="#c4c4c4" textLength="8.2" lengthAdjust="spacing" >M</text>
<text x="863.8" y="1184.8" font-size="9.6" fill="#c4c4c4" textLength="5.6" lengthAdjust="spacingAndGlyphs" >S</text>
<rect x="891.2" y="1173.4" width="4.8" height="9.4" fill="#424242" rx="2.4"/><path d="M889.4 1179.4v1a4.2 4.2 0 0 0 8.4 0v-1M893.6 1184.8v2.4M891 1187.4h5.2" fill="none" stroke="#424242" stroke-width="1.1" />
<path d="M922 1174.2h1.6l3.4-2.4v7.2l-3.4-2.4h-1.6z" fill="#c6c6c6" />
<rect x="704" y="1193" width="234" height="25" fill="#222222" />
<rect x="704" y="1217.4" width="234" height="1" fill="#2e2e2e" />
<rect x="767.2" y="1193.4" width="32" height="23.8" fill="#0d69a9" />
<rect x="752.8" y="1203.8" width="8.4" height="6" fill="#c6c6c6" rx="0.8"/><path d="M754.4 1203.8v-2.2a2.4 2.4 0 0 1 4.6-1" fill="none" stroke="#c6c6c6" stroke-width="1.5" /><rect x="756.1" y="1205.6" width="1.8" height="2.6" fill="#222222" />
<text x="776.2" y="1209.8" font-size="10.4" fill="#a9cdee" textLength="11" lengthAdjust="spacingAndGlyphs" >A3</text>
<rect x="807.25" y="1200.75" width="8.2" height="3.2" fill="none" stroke="#c6c6c6" stroke-width="1.3"/><rect x="807.25" y="1205.65" width="8.2" height="3.2" fill="none" stroke="#c6c6c6" stroke-width="1.3"/><path d="M815.6 1202.2h2.8v5.6h-2.8" fill="none" stroke="#c6c6c6" stroke-width="1.5" />
<text x="835.4" y="1209.8" font-size="9.6" fill="#c4c4c4" textLength="8.2" lengthAdjust="spacing" >M</text>
<text x="863.8" y="1209.8" font-size="9.6" fill="#c4c4c4" textLength="5.6" lengthAdjust="spacingAndGlyphs" >S</text>
<rect x="891.2" y="1198.4" width="4.8" height="9.4" fill="#424242" rx="2.4"/><path d="M889.4 1204.4v1a4.2 4.2 0 0 0 8.4 0v-1M893.6 1209.8v2.4M891 1212.4h5.2" fill="none" stroke="#424242" stroke-width="1.1" />
<path d="M922 1199.2h1.6l3.4-2.4v7.2l-3.4-2.4h-1.6z" fill="#c6c6c6" />
<rect x="704" y="1218" width="234" height="25" fill="#222222" />
<rect x="704" y="1242.4" width="234" height="1" fill="#2e2e2e" />
<rect x="767.2" y="1218.4" width="32" height="23.8" fill="#0d69a9" />
<rect x="752.8" y="1228.8" width="8.4" height="6" fill="#c6c6c6" rx="0.8"/><path d="M754.4 1228.8v-2.2a2.4 2.4 0 0 1 4.6-1" fill="none" stroke="#c6c6c6" stroke-width="1.5" /><rect x="756.1" y="1230.6" width="1.8" height="2.6" fill="#222222" />
<text x="776.2" y="1234.8" font-size="10.4" fill="#a9cdee" textLength="11" lengthAdjust="spacingAndGlyphs" >A4</text>
<rect x="807.25" y="1225.75" width="8.2" height="3.2" fill="none" stroke="#c6c6c6" stroke-width="1.3"/><rect x="807.25" y="1230.65" width="8.2" height="3.2" fill="none" stroke="#c6c6c6" stroke-width="1.3"/><path d="M815.6 1227.2h2.8v5.6h-2.8" fill="none" stroke="#c6c6c6" stroke-width="1.5" />
<text x="835.4" y="1234.8" font-size="9.6" fill="#c4c4c4" textLength="8.2" lengthAdjust="spacing" >M</text>
<text x="863.8" y="1234.8" font-size="9.6" fill="#c4c4c4" textLength="5.6" lengthAdjust="spacingAndGlyphs" >S</text>
<rect x="891.2" y="1223.4" width="4.8" height="9.4" fill="#424242" rx="2.4"/><path d="M889.4 1229.4v1a4.2 4.2 0 0 0 8.4 0v-1M893.6 1234.8v2.4M891 1237.4h5.2" fill="none" stroke="#424242" stroke-width="1.1" />
<path d="M922 1224.2h1.6l3.4-2.4v7.2l-3.4-2.4h-1.6z" fill="#c6c6c6" />
<rect x="704" y="1243" width="234" height="25" fill="#222222" />
<rect x="704" y="1267.4" width="234" height="1" fill="#2e2e2e" />
<rect x="752.8" y="1254" width="8.4" height="6" fill="#c6c6c6" rx="0.8"/><path d="M754.4 1254v-2.2a2.4 2.4 0 0 1 4.6-1" fill="none" stroke="#c6c6c6" stroke-width="1.5" /><rect x="756.1" y="1255.8" width="1.8" height="2.6" fill="#222222" />
<text x="771" y="1259.6" font-size="12.4" fill="#a4a4a4" textLength="25.4" lengthAdjust="spacing" >混合</text>
<text x="846.8" y="1258.8" font-size="10.4" fill="#2d8ceb" textLength="14.2" lengthAdjust="spacingAndGlyphs" >0.0</text>
<path d="M919 1246.8l5.6 4.2l5.6-4.2v8.6l-5.6-4.2l-5.6 4.2z" fill="#c8c8c8" />
<rect x="2351" y="924" width="10.4" height="213" fill="#2d2d2d" rx="5.2"/>
<circle cx="2356.2" cy="929.2" r="4.1" fill="#2e2e2e" stroke="#b4b4b4" stroke-width="1.9" /><circle cx="2356.2" cy="1132" r="4.1" fill="#2e2e2e" stroke="#b4b4b4" stroke-width="1.9" />
<rect x="2351" y="1144" width="10.4" height="215" fill="#2d2d2d" rx="5.2"/>
<circle cx="2356.2" cy="1149.2" r="4.1" fill="#2e2e2e" stroke="#b4b4b4" stroke-width="1.9" /><circle cx="2356.2" cy="1354" r="4.1" fill="#2e2e2e" stroke="#b4b4b4" stroke-width="1.9" />
<rect x="716.5" y="1364.5" width="1632" height="10" fill="#1b1b1b" rx="5" stroke="#2a2a2a" stroke-width="1"/>
<rect x="813" y="1364.5" width="236" height="10.4" fill="#2e2e2e" rx="5.2"/>
<circle cx="817.6" cy="1369.6" r="4.1" fill="#2e2e2e" stroke="#b4b4b4" stroke-width="1.9" /><circle cx="1043.6" cy="1369.6" r="4.1" fill="#2e2e2e" stroke="#b4b4b4" stroke-width="1.9" />
<rect x="703.5" y="846.5" width="1669" height="540" fill="none" stroke="#0c2c62" stroke-width="1"/>
<rect x="702.5" y="845.5" width="1671" height="542" fill="none" stroke="#5a98e4" stroke-width="1"/>
</g>
<g id="meters">
<rect x="2374" y="845" width="182" height="542.5" fill="#1f1f1f" />
<rect x="2390.5" y="871.5" width="134" height="480" fill="#1a1a1a" stroke="#0c0c0c" stroke-width="1"/>
<rect x="2390.5" y="880" width="134" height="1" fill="#0c0c0c" />
<rect x="2457" y="871.5" width="1" height="9" fill="#0c0c0c" />
<text x="2535.6" y="885.6" font-size="9.6" fill="#8c8c8c" >0</text>
<text x="2532.4" y="909.05" font-size="9.6" fill="#8c8c8c" >-3</text>
<text x="2532.4" y="932.5" font-size="9.6" fill="#8c8c8c" >-6</text>
<text x="2532.4" y="955.95" font-size="9.6" fill="#8c8c8c" >-9</text>
<text x="2532.4" y="979.4" font-size="9.6" fill="#8c8c8c" >-12</text>
<text x="2532.4" y="1002.85" font-size="9.6" fill="#8c8c8c" >-15</text>
<text x="2532.4" y="1026.3" font-size="9.6" fill="#8c8c8c" >-18</text>
<text x="2532.4" y="1049.75" font-size="9.6" fill="#8c8c8c" >-21</text>
<text x="2532.4" y="1073.2" font-size="9.6" fill="#8c8c8c" >-24</text>
<text x="2532.4" y="1096.65" font-size="9.6" fill="#8c8c8c" >-27</text>
<text x="2532.4" y="1120.1" font-size="9.6" fill="#8c8c8c" >-30</text>
<text x="2532.4" y="1143.55" font-size="9.6" fill="#8c8c8c" >-33</text>
<text x="2532.4" y="1167" font-size="9.6" fill="#8c8c8c" >-36</text>
<text x="2532.4" y="1190.45" font-size="9.6" fill="#8c8c8c" >-39</text>
<text x="2532.4" y="1213.9" font-size="9.6" fill="#8c8c8c" >-42</text>
<text x="2532.4" y="1237.35" font-size="9.6" fill="#8c8c8c" >-45</text>
<text x="2532.4" y="1260.8" font-size="9.6" fill="#8c8c8c" >-48</text>
<text x="2532.4" y="1284.25" font-size="9.6" fill="#8c8c8c" >-51</text>
<text x="2532.4" y="1307.7" font-size="9.6" fill="#8c8c8c" >-54</text>
<text x="2532.4" y="1331.15" font-size="9.6" fill="#8c8c8c" >-57</text>
<path d="M2526 882.5h4.4M2526 906.5h4.4M2526 929.5h4.4M2526 953.5h4.4M2526 976.5h4.4M2526 999.5h4.4M2526 1023.5h4.4M2526 1046.5h4.4M2526 1070.5h4.4M2526 1093.5h4.4M2526 1117.5h4.4M2526 1140.5h4.4M2526 1164.5h4.4M2526 1187.5h4.4M2526 1210.5h4.4M2526 1234.5h4.4M2526 1257.5h4.4M2526 1281.5h4.4M2526 1304.5h4.4M2526 1328.5h4.4" fill="none" stroke="#8c8c8c" stroke-width="1" />
<path d="M2526 890.5h2.4M2526 898.5h2.4M2526 913.5h2.4M2526 921.5h2.4M2526 937.5h2.4M2526 945.5h2.4M2526 960.5h2.4M2526 968.5h2.4M2526 984.5h2.4M2526 992.5h2.4M2526 1007.5h2.4M2526 1015.5h2.4M2526 1031.5h2.4M2526 1039.5h2.4M2526 1054.5h2.4M2526 1062.5h2.4M2526 1078.5h2.4M2526 1085.5h2.4M2526 1101.5h2.4M2526 1109.5h2.4M2526 1125.5h2.4M2526 1132.5h2.4M2526 1148.5h2.4M2526 1156.5h2.4M2526 1171.5h2.4M2526 1179.5h2.4M2526 1195.5h2.4M2526 1203.5h2.4M2526 1218.5h2.4M2526 1226.5h2.4M2526 1242.5h2.4M2526 1250.5h2.4M2526 1265.5h2.4M2526 1273.5h2.4M2526 1289.5h2.4M2526 1296.5h2.4M2526 1312.5h2.4M2526 1320.5h2.4" fill="none" stroke="#8c8c8c" stroke-width="1" />
<text x="2534" y="1353.4" font-size="9.6" fill="#8c8c8c" >dB</text>
<path d="M2526 1350.5h2.4M2526 1343.5h2.4M2526 1335.5h2.4" fill="none" stroke="#8c8c8c" stroke-width="1" />
<rect x="2390.5" y="1351.6" width="66" height="1.4" fill="#d8d860" /><rect x="2458" y="1351.6" width="66.5" height="1.4" fill="#d8d860" />
<rect x="2415.2" y="1358.6" width="16" height="16" fill="#171717" stroke="#2a2a2a" stroke-width="1"/>
<text x="2423.2" y="1370.4" font-size="10" fill="#c4c4c4" text-anchor="middle" >S</text>
<rect x="2482.4" y="1358.6" width="16" height="16" fill="#171717" stroke="#2a2a2a" stroke-width="1"/>
<text x="2490.4" y="1370.4" font-size="10" fill="#c4c4c4" text-anchor="middle" >S</text>
</g>
<g id="status">
<rect x="0" y="1388.4" width="2560" height="20.6" fill="#202020" />
<path d="M5 1402.4a4 4 0 0 1 1.6-7.2a5.6 5.6 0 0 1 10 1.4a3.6 3.6 0 0 1-1 7h-8.6a4 4 0 0 1-2-1.2z" fill="none" stroke="#b4b4b4" stroke-width="1.5" />
<path d="M7.6 1400.6a2.6 2.6 0 0 1 3.6-3.4a3 3 0 0 1 5.2 2.4" fill="none" stroke="#b4b4b4" stroke-width="1.3" />
<text x="58" y="1403.4" font-size="12.2" fill="#a8a8a8" textLength="283" lengthAdjust="spacing" >单击以选择，或单击空白处并拖动以进行框选。</text>
<text x="343.8" y="1403.4" font-size="12.2" fill="#a8a8a8" textLength="25.6" lengthAdjust="spacing" >使用</text>
<text x="372.6" y="1403.4" font-size="10.6" fill="#8e8e8e" textLength="21.4" lengthAdjust="spacing" >Shift</text>
<text x="396.4" y="1403.4" font-size="12.2" fill="#a8a8a8" >、</text>
<text x="408.8" y="1403.4" font-size="10.6" fill="#8e8e8e" textLength="11.6" lengthAdjust="spacingAndGlyphs" >Alt</text>
<text x="427" y="1403.4" font-size="12.2" fill="#a8a8a8" >和</text>
<text x="442.6" y="1403.4" font-size="10.6" fill="#8e8e8e" textLength="17" lengthAdjust="spacing" >Ctrl</text>
<text x="463.8" y="1403.4" font-size="12.2" fill="#a8a8a8" textLength="106.8" lengthAdjust="spacing" >可获得其他选项。</text>
<rect x="2534" y="1389" width="1" height="19" fill="#141414" />
<circle cx="2547.2" cy="1399.6" r="5.6" fill="none" stroke="#bcbcbc" stroke-width="1.4" />
<rect x="2546.5" y="1398.6" width="1.5" height="4" fill="#bcbcbc" /><rect x="2546.5" y="1396" width="1.5" height="1.5" fill="#bcbcbc" />
<rect x="0" y="1409" width="2560" height="9" fill="#282828" />
<linearGradient id="tbg" x1="0" x2="1" y1="0" y2="0"><stop offset="0" stop-color="#2b2b2b"/><stop offset="0.5" stop-color="#272727"/><stop offset="1" stop-color="#1c1c1c"/></linearGradient>
<rect x="0" y="1409" width="2560" height="9" fill="url(#tbg)" />
<rect x="1398.6" y="1409.4" width="160" height="8.6" fill="#c07028" />
<rect x="1721" y="1409.6" width="160" height="8.4" fill="#5e5e5e" />
<rect x="1408" y="1416.4" width="14" height="1.6" fill="#1a1010" /><rect x="1569" y="1416.2" width="13" height="1.8" fill="#d0205a" /><rect x="1730" y="1416.2" width="14" height="1.8" fill="#1c1060" />
<rect x="20" y="1416.6" width="6" height="1.4" fill="#e8e8e8" /><rect x="52" y="1416.6" width="6" height="1.4" fill="#30b0e0" /><rect x="370" y="1416.4" width="9" height="1.6" fill="#f0c030" /><rect x="535" y="1416.6" width="5" height="1.4" fill="#3070d0" /><rect x="569" y="1416.4" width="10" height="1.6" fill="#3a6ad8" />
<path d="M2098 1409.6l6 6.4v2h-6z" fill="#e8b020" />
<rect x="2228" y="1416.6" width="12" height="1.4" fill="#3a7ad0" />
<rect x="2250" y="1416.6" width="12" height="1.4" fill="#38a8d8" />
<rect x="2277" y="1416.6" width="12" height="1.4" fill="#30b0e0" />
<rect x="2347" y="1416.6" width="12" height="1.4" fill="#111" />
<rect x="2400" y="1416.6" width="12" height="1.4" fill="#2a6ad0" />
<rect x="2452" y="1416.6" width="12" height="1.4" fill="#e04020" />
</g>
</svg>
</body></html>
